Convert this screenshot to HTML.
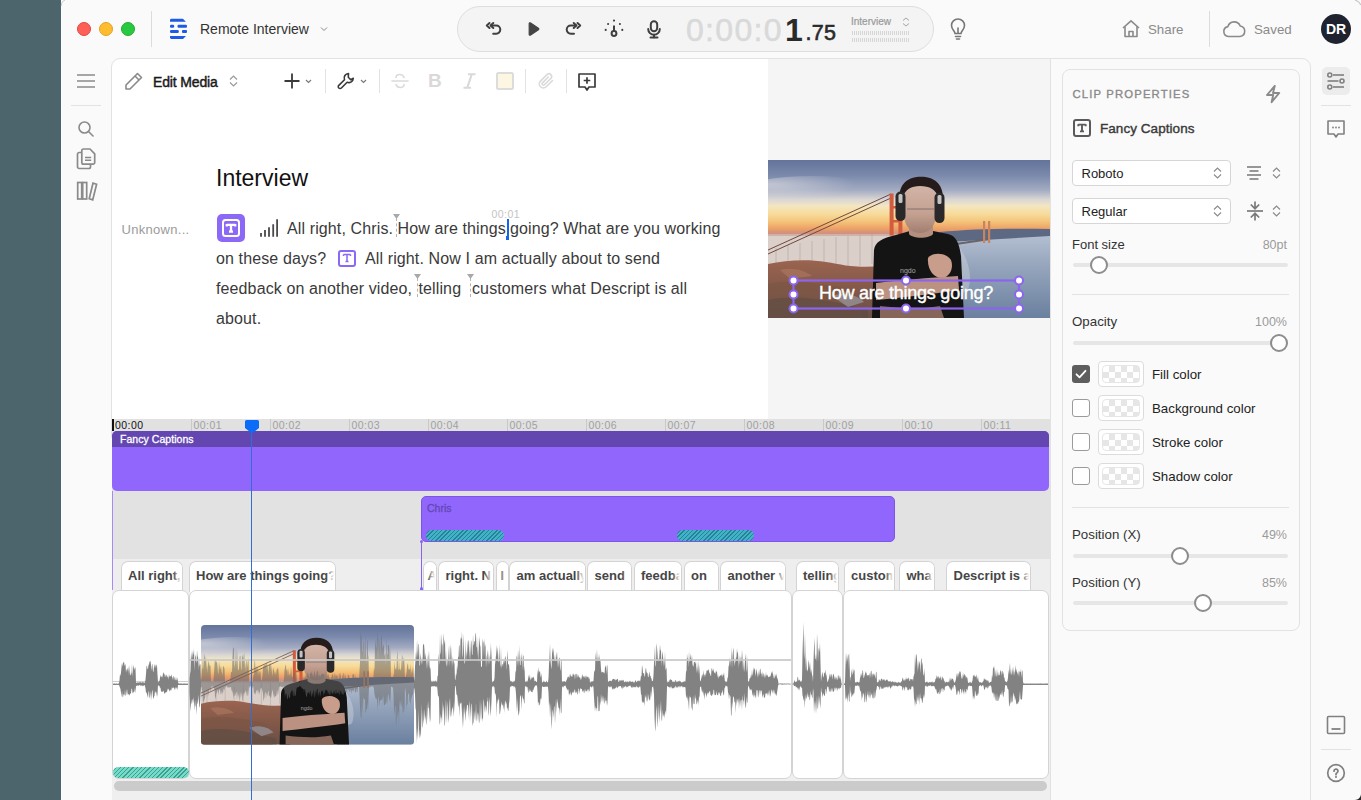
<!DOCTYPE html>
<html><head><meta charset="utf-8">
<style>
*{margin:0;padding:0;box-sizing:border-box}
html,body{width:1361px;height:800px;overflow:hidden;background:#4c656d;font-family:"Liberation Sans",sans-serif;color:#333}
.a{position:absolute}
#win{position:absolute;left:61px;top:0;width:1300px;height:800px;background:#fafafa;border-left:1px solid #fdfdfd;overflow:hidden}
svg{display:block;position:absolute;overflow:visible}
.t{position:absolute;white-space:nowrap;line-height:1}
</style></head><body>
<div id="win"></div>
<svg style="left:61px;top:0" width="6" height="6" viewBox="0 0 6 6"><path d="M0.3 6C0.3 3 1.5 1 4 0" fill="none" stroke="#c8c8c8" stroke-width="1"/></svg>
<svg style="left:1352px;top:0" width="9" height="6" viewBox="0 0 9 6"><path d="M3 0C6 1 8 3 9 5" fill="none" stroke="#c8c8c8" stroke-width="1.2"/></svg>
<svg style="left:1355px;top:794px" width="6" height="6" viewBox="0 0 6 6"><path d="M6 0V6H0C3 6 6 3 6 0z" fill="#2a2a2a"/></svg>
<div class="a" style="left:0;top:0;width:1361px;height:800px">

<!-- ============ TOP BAR ============ -->
<div class="a" style="left:77px;top:22px;width:14px;height:14px;border-radius:50%;background:#fe5f57;border:0.5px solid #e2463f"></div>
<div class="a" style="left:99px;top:22px;width:14px;height:14px;border-radius:50%;background:#febc2e;border:0.5px solid #e1a325"></div>
<div class="a" style="left:121px;top:22px;width:14px;height:14px;border-radius:50%;background:#28c840;border:0.5px solid #1dad2b"></div>
<div class="a" style="left:151px;top:11px;width:1px;height:36px;background:#dcdcdc"></div>
<!-- logo -->
<svg style="left:169px;top:18px" width="20" height="22" viewBox="0 0 20 22">
 <path d="M1 2.2a1.4 1.4 0 0 1 1.4-1.4h11.5l3 3H1z" fill="#1d5ae8"/>
 <rect x="1" y="6.8" width="4.2" height="2.9" rx="1.2" fill="#1d5ae8"/><rect x="8.5" y="6.8" width="9.5" height="2.9" rx="1.2" fill="#1d5ae8"/>
 <rect x="1" y="12" width="8.8" height="3" rx="1.2" fill="#1d5ae8"/><rect x="13" y="12" width="5" height="3" rx="1" fill="#1d5ae8"/>
 <path d="M1 18h16l-3 3H2.4A1.4 1.4 0 0 1 1 19.6z" fill="#1d5ae8"/>
</svg>
<div class="t" style="left:200px;top:22px;font-size:14px;color:#333">Remote Interview</div>
<svg style="left:320px;top:26px" width="8" height="6" viewBox="0 0 8 6"><path d="M1 1.5l3 3 3-3" fill="none" stroke="#888" stroke-width="1"/></svg>

<!-- transport pill -->
<div class="a" style="left:457px;top:6px;width:477px;height:46px;border-radius:23px;background:#f4f4f4;border:1px solid #dedede"></div>
<!-- undo -->
<svg style="left:484px;top:19px" width="20" height="20" viewBox="0 0 20 20"><g fill="none" stroke="#3f3f3f" stroke-width="2" stroke-linecap="round" stroke-linejoin="round"><path d="M5.5 4L2.8 6.5l2.7 2.5"/><path d="M9.3 4L6.6 6.5l2.7 2.5"/><path d="M7 6.5h5.2a4 4 0 0 1 0 8.2H9.2"/></g></svg>
<!-- play -->
<svg style="left:527px;top:21px" width="14" height="16" viewBox="0 0 14 16"><path d="M2.2 2.6a.9.9 0 0 1 1.4-.7l7.8 5.3a1 1 0 0 1 0 1.6l-7.8 5.3a.9.9 0 0 1-1.4-.7z" fill="#444" stroke="#444" stroke-width="1.2" stroke-linejoin="round"/></svg>
<!-- redo -->
<svg style="left:563px;top:19px" width="20" height="20" viewBox="0 0 20 20"><g fill="none" stroke="#3f3f3f" stroke-width="2" stroke-linecap="round" stroke-linejoin="round"><path d="M10.7 4l2.7 2.5-2.7 2.5"/><path d="M14.5 4l2.7 2.5-2.7 2.5"/><path d="M13 6.5H7.8a4 4 0 0 0 0 8.2H11"/></g></svg>
<!-- split -->
<svg style="left:604px;top:19px" width="20" height="20" viewBox="0 0 20 20"><g fill="#3f3f3f"><circle cx="10" cy="1.6" r="1.05"/><circle cx="4.1" cy="5" r="1.05"/><circle cx="15.9" cy="5" r="1.05"/><circle cx="1.7" cy="10.9" r="1.05"/><circle cx="18.3" cy="10.9" r="1.05"/></g><g fill="none" stroke="#3f3f3f" stroke-width="2"><path d="M10 6.5v5.5"/><circle cx="10" cy="14.5" r="2.4"/></g></svg>
<!-- mic -->
<svg style="left:645px;top:18px" width="18" height="22" viewBox="0 0 18 22"><g fill="none" stroke="#3f3f3f" stroke-width="2" stroke-linecap="round"><rect x="5.8" y="3.2" width="6.4" height="10" rx="3.2"/><path d="M3.2 11a5.8 5.8 0 0 0 11.6 0"/><path d="M9 16.8v3M5.5 19.6h7"/></g></svg>
<!-- timecode -->
<div class="t" style="left:686px;top:13.9px;font-size:32px;color:#d9d9d9;letter-spacing:1.3px;-webkit-text-stroke:0.5px #d9d9d9">0:00:0</div>
<div class="t" style="left:785px;top:13.9px;font-size:32px;font-weight:bold;color:#2a2a2a">1</div>
<div class="t" style="left:805.5px;top:22.8px;font-size:21.5px;color:#2a2a2a;letter-spacing:0.3px;-webkit-text-stroke:0.6px #2a2a2a">.75</div>
<div class="t" style="left:851px;top:16.5px;font-size:10px;color:#9a9a9a;-webkit-text-stroke:0.2px #9a9a9a">Interview</div>
<svg style="left:902px;top:17px" width="8" height="10" viewBox="0 0 8 10"><path d="M1 3.5L4 1l3 2.5M1 6.5L4 9l3-2.5" fill="none" stroke="#a5a5a5" stroke-width="1"/></svg>
<div class="a" style="left:852px;top:31px;width:58px;height:4px;background:repeating-linear-gradient(90deg,#d6d6d6 0 1px,transparent 1px 2px)"></div>
<div class="a" style="left:852px;top:37.5px;width:58px;height:4px;background:repeating-linear-gradient(90deg,#d6d6d6 0 1px,transparent 1px 2px)"></div>
<!-- bulb -->
<svg style="left:948px;top:18px" width="20" height="22" viewBox="0 0 20 22"><g fill="none" stroke="#777" stroke-width="1.6" stroke-linecap="round"><path d="M7 15.5c0-2.5-3.5-4-3.5-8a6.5 6.5 0 0 1 13 0c0 4-3.5 5.5-3.5 8z"/><path d="M7.5 18.5h5M8.5 21h3"/><path d="M10 15V10"/></g></svg>

<!-- share -->
<svg style="left:1121px;top:19px" width="20" height="19" viewBox="0 0 20 19"><g fill="none" stroke="#8a8a8a" stroke-width="1.6" stroke-linejoin="round"><path d="M2 9L10 1.8 18 9"/><path d="M4 7.5V17.5h12V7.5"/><path d="M8 17.5v-5h4v5"/></g></svg>
<div class="t" style="left:1148px;top:22.6px;font-size:13.3px;color:#8a8a8a">Share</div>
<div class="a" style="left:1209px;top:11px;width:1px;height:36px;background:#dcdcdc"></div>
<svg style="left:1222px;top:19px" width="24" height="20" viewBox="0 0 24 20"><path d="M6.5 17.5a5 5 0 0 1-.6-9.9A6.5 6.5 0 0 1 18.2 7a5.3 5.3 0 0 1-.2 10.5z" fill="none" stroke="#8a8a8a" stroke-width="1.6" stroke-linejoin="round"/></svg>
<div class="t" style="left:1254px;top:22.6px;font-size:13.3px;color:#8a8a8a">Saved</div>
<div class="a" style="left:1321px;top:14px;width:30px;height:30px;border-radius:50%;background:#1f2330"></div>
<div class="t" style="left:1321px;top:22px;width:30px;text-align:center;font-size:14px;font-weight:bold;color:#fff">DR</div>

<!-- ============ LEFT RAIL ============ -->
<svg style="left:77px;top:74px" width="18" height="14" viewBox="0 0 18 14"><g stroke="#8a8a8a" stroke-width="1.6"><path d="M0 1h18M0 7h18M0 13h18"/></g></svg>
<div class="a" style="left:71px;top:105px;width:30px;height:1px;background:#e2e2e2"></div>
<svg style="left:77px;top:120px" width="18" height="18" viewBox="0 0 18 18"><g fill="none" stroke="#8a8a8a" stroke-width="1.6" stroke-linecap="round"><circle cx="7.5" cy="7.5" r="5.5"/><path d="M11.5 11.5l4.5 4.5"/></g></svg>
<svg style="left:76px;top:148px" width="20" height="22" viewBox="0 0 20 22"><g fill="none" stroke="#8a8a8a" stroke-width="1.7" stroke-linejoin="round"><path d="M5 4.5H3.2A1.7 1.7 0 0 0 1.5 6.2v12.6a1.7 1.7 0 0 0 1.7 1.7h9.6a1.7 1.7 0 0 0 1.7-1.7V16.5"/><path d="M7.5 1h6.5l4.7 4.8v8.7a1.7 1.7 0 0 1-1.7 1.7H7.5a1.7 1.7 0 0 1-1.7-1.7V2.7A1.7 1.7 0 0 1 7.5 1z" fill="#fafafa"/><path d="M9 9.5h6.2M9 12.2h6.2" stroke-width="1.5"/></g></svg>
<svg style="left:76px;top:181px" width="21" height="20" viewBox="0 0 21 20"><g fill="none" stroke="#8a8a8a" stroke-width="1.7" stroke-linejoin="miter"><rect x="1.7" y="1.5" width="4" height="16.5"/><rect x="6.7" y="1.5" width="4" height="16.5"/><path d="M13.2 17.8L17 2.2l3.6 1.1-3.9 15.6z"/></g></svg>

<!-- ============ EDITOR ============ -->
<div class="a" style="left:111px;top:58px;width:990px;height:380px;background:#fff;border:1px solid #e2e2e2;border-top-left-radius:9px"></div>
<div class="a" style="left:768px;top:59px;width:282px;height:360px;background:#f5f5f5"></div>
<!-- toolbar -->
<svg style="left:124px;top:72px" width="19" height="19" viewBox="0 0 19 19"><g fill="none" stroke="#8a8a8a" stroke-width="1.6" stroke-linejoin="round"><path d="M13.5 1.5l4 4L6 17H2v-4z"/><path d="M11 4l4 4"/></g></svg>
<div class="t" style="left:153px;top:74.5px;font-size:14px;color:#1a1a1a;letter-spacing:-0.15px;-webkit-text-stroke:0.45px #1a1a1a">Edit Media</div>
<svg style="left:229px;top:75px" width="9" height="12" viewBox="0 0 9 12"><path d="M1 4.5l3.5-3.5L8 4.5M1 7.5L4.5 11 8 7.5" fill="none" stroke="#9a9a9a" stroke-width="1.2"/></svg>
<svg style="left:284px;top:73px" width="16" height="16" viewBox="0 0 16 16"><path d="M8 0.5v15M0.5 8h15" stroke="#3a3a3a" stroke-width="1.8"/></svg>
<svg style="left:305px;top:79px" width="7" height="5" viewBox="0 0 7 5"><path d="M1 1l2.5 2.5L6 1" fill="none" stroke="#777" stroke-width="1.1"/></svg>
<div class="a" style="left:325px;top:69px;width:1px;height:24px;background:#e2e2e2"></div>
<svg style="left:337px;top:72px" width="18" height="18" viewBox="0 0 18 18"><path d="M11.5 1.5a4.5 4.5 0 0 0-4 6.2L1.8 13.4a1.8 1.8 0 0 0 2.6 2.6l5.7-5.7a4.5 4.5 0 0 0 6.2-4l-2.6 1.4-2.4-2.4z" fill="none" stroke="#3a3a3a" stroke-width="1.6" stroke-linejoin="round"/></svg>
<svg style="left:360px;top:79px" width="7" height="5" viewBox="0 0 7 5"><path d="M1 1l2.5 2.5L6 1" fill="none" stroke="#777" stroke-width="1.1"/></svg>
<div class="a" style="left:379px;top:69px;width:1px;height:24px;background:#e2e2e2"></div>
<svg style="left:391px;top:73px" width="18" height="16" viewBox="0 0 18 16"><g fill="none" stroke="#dadada" stroke-width="1.6" stroke-linecap="round"><path d="M1 8h16"/><path d="M13 4.5c-.6-1.8-2.2-3-4.2-3C6.5 1.5 5 2.8 5 4.5M5 11.5c.6 1.8 2.2 3 4.2 3 2.3 0 3.8-1.3 3.8-3"/></g></svg>
<div class="t" style="left:428px;top:71px;font-size:19px;font-weight:bold;color:#d9d9d9">B</div>
<svg style="left:462px;top:73px" width="15" height="16" viewBox="0 0 15 16"><path d="M6 1.2h7.5M1.5 14.8H9M9.8 1.2L5.2 14.8" stroke="#d9d9d9" stroke-width="2.1" fill="none"/></svg>
<div class="a" style="left:496px;top:72px;width:18px;height:17.5px;border:2px solid #dcdcdc;border-radius:2.5px;background:#fdf6e2"></div>
<div class="a" style="left:525px;top:69px;width:1px;height:24px;background:#e2e2e2"></div>
<svg style="left:537px;top:72px" width="18" height="18" viewBox="0 0 18 18"><path d="M15.5 8.5l-6.3 6.3a4 4 0 0 1-5.7-5.7l6.7-6.7a2.7 2.7 0 0 1 3.8 3.8L7.4 12.8a1.3 1.3 0 0 1-1.9-1.9L11.3 5" fill="none" stroke="#dadada" stroke-width="1.6" stroke-linecap="round"/></svg>
<div class="a" style="left:566px;top:69px;width:1px;height:24px;background:#e2e2e2"></div>
<svg style="left:577px;top:72px" width="20" height="20" viewBox="0 0 20 20"><g fill="none" stroke="#3a3a3a" stroke-width="1.7" stroke-linejoin="round"><path d="M2 2h16v13h-6l-2 3-2-3H2z"/><path d="M10 5.2v6.6M6.7 8.5h6.6"/></g></svg>

<!-- transcript -->
<div class="t" style="left:216px;top:166.5px;font-size:23px;color:#111">Interview</div>
<div class="t" style="left:121.5px;top:223px;font-size:13px;letter-spacing:0.3px;color:#9b9b9b">Unknown...</div>
<div class="a" style="left:217px;top:214px;width:28px;height:28px;border-radius:5px;background:#8c68f6"></div>
<div class="a" style="left:222px;top:219px;width:18px;height:18px;border-radius:3.5px;border:2.3px solid #fff"></div>
<svg style="left:224px;top:221px" width="14" height="14" viewBox="0 0 14 14"><path d="M2.8 3.8h8.4M7 3.8v6.6M5 10.6h4M2.8 3v2.4M11.2 3v2.4" stroke="#fff" stroke-width="2.3" fill="none"/></svg>
<svg style="left:259px;top:218px" width="20" height="20" viewBox="0 0 20 20"><g stroke="#4a4a4a" stroke-width="1.8"><path d="M2 18.7v-3.6M6 18.7v-6.6M10 18.7v-9.5M14.2 18.7v-12.5M18.1 18.7V1.2"/></g></svg>
<div class="t" style="left:287px;top:220.5px;font-size:16px;color:#3a3a3a;letter-spacing:0.12px">All right, Chris.</div>
<div class="a" style="left:396px;top:218px;width:0;height:19px;border-left:1px dashed #b5b5b5"></div>
<svg style="left:393px;top:214px" width="7" height="5" viewBox="0 0 7 5"><path d="M0 0h7L3.5 5z" fill="#a8a8a8"/></svg>
<div class="t" style="left:397.5px;top:220.5px;font-size:16px;color:#3a3a3a;letter-spacing:0.12px">How are things</div>
<div class="t" style="left:491.5px;top:208.5px;font-size:10.5px;letter-spacing:0.45px;color:#c3c3c3">00:01</div>
<div class="a" style="left:506.5px;top:219px;width:2px;height:20px;background:#1565e8"></div>
<div class="a" style="left:506px;top:236px;width:3px;height:4px;background:#1565e8"></div>
<div class="t" style="left:510px;top:220.5px;font-size:16px;color:#3a3a3a;letter-spacing:0.12px">going? What are you working</div>

<div class="t" style="left:216px;top:250.5px;font-size:16px;color:#3a3a3a;letter-spacing:0.12px">on these days?</div>
<div class="a" style="left:338px;top:249.5px;width:18px;height:17px;border-radius:3px;border:2px solid #8c68f6"></div>
<svg style="left:341px;top:252px" width="12" height="12" viewBox="0 0 12 12"><path d="M2.5 2.5h7M6 2.5v7M4.5 9.5h3M2.5 2.5v1.4M9.5 2.5v1.4" stroke="#8c68f6" stroke-width="1.5" fill="none"/></svg>
<div class="t" style="left:365px;top:250.5px;font-size:16px;color:#3a3a3a;letter-spacing:0.12px">All right. Now I am actually about to send</div>

<div class="t" style="left:216px;top:281px;font-size:16px;color:#3a3a3a;letter-spacing:0.12px">feedback on another video,</div>
<div class="a" style="left:416.5px;top:278px;width:0;height:19px;border-left:1px dashed #b5b5b5"></div>
<svg style="left:413.5px;top:274px" width="7" height="5" viewBox="0 0 7 5"><path d="M0 0h7L3.5 5z" fill="#a8a8a8"/></svg>
<div class="t" style="left:418.5px;top:281px;font-size:16px;color:#3a3a3a;letter-spacing:0.12px">telling</div>
<div class="a" style="left:469.5px;top:278px;width:0;height:19px;border-left:1px dashed #b5b5b5"></div>
<svg style="left:466.5px;top:274px" width="7" height="5" viewBox="0 0 7 5"><path d="M0 0h7L3.5 5z" fill="#a8a8a8"/></svg>
<div class="t" style="left:472px;top:281px;font-size:16px;color:#3a3a3a;letter-spacing:0.12px">customers what Descript is all</div>
<div class="t" style="left:216px;top:311px;font-size:16px;color:#3a3a3a;letter-spacing:0.12px">about.</div>

<!-- ============ RIGHT PANEL ============ -->
<div class="a" style="left:1050px;top:58px;width:261px;height:760px;border:1px solid #e2e2e2;border-top-right-radius:9px;background:#fafafa"></div>
<div class="a" style="left:1062px;top:69px;width:238px;height:562px;border:1px solid #e2e2e2;border-radius:8px;background:#fafafa"></div>
<div class="t" style="left:1072.5px;top:88.8px;font-size:11.3px;letter-spacing:1.15px;color:#8a8a8a;-webkit-text-stroke:0.35px #8a8a8a">CLIP PROPERTIES</div>
<svg style="left:1263px;top:84px" width="20" height="20" viewBox="0 0 20 20"><path d="M11.8 1.8L4 11h6.2l-1.6 7.2L16.2 9H10z" fill="none" stroke="#8a8a8a" stroke-width="1.9" stroke-linejoin="round"/></svg>
<div class="a" style="left:1073px;top:119px;width:18px;height:18px;border-radius:3px;border:2px solid #5a5a5a"></div>
<svg style="left:1076px;top:122px" width="12" height="12" viewBox="0 0 12 12"><path d="M2.3 2.6h7.4M6 2.6v6.8M4 9.4h4M2.3 2.2v2M9.7 2.2v2" stroke="#5a5a5a" stroke-width="1.9" fill="none"/></svg>
<div class="t" style="left:1100px;top:122px;font-size:13.5px;color:#3a3a3a;letter-spacing:0.05px;-webkit-text-stroke:0.4px #3a3a3a">Fancy Captions</div>

<div class="a" style="left:1072px;top:160px;width:159px;height:26px;border-radius:4px;border:1px solid #d6d6d6;background:#fff"></div>
<div class="t" style="left:1081.5px;top:166.5px;font-size:13px;color:#222">Roboto</div>
<svg style="left:1213px;top:167px" width="9" height="12" viewBox="0 0 9 12"><path d="M1 4.5l3.5-3.5L8 4.5M1 7.5L4.5 11 8 7.5" fill="none" stroke="#8a8a8a" stroke-width="1.1"/></svg>
<svg style="left:1246px;top:165px" width="16" height="16" viewBox="0 0 16 16"><path d="M1 2h14M3.5 6h9M1 10h14M3.5 14h9" stroke="#777" stroke-width="1.5"/></svg>
<svg style="left:1272px;top:167px" width="9" height="12" viewBox="0 0 9 12"><path d="M1 4.5l3.5-3.5L8 4.5M1 7.5L4.5 11 8 7.5" fill="none" stroke="#8a8a8a" stroke-width="1.1"/></svg>

<div class="a" style="left:1072px;top:198px;width:159px;height:26px;border-radius:4px;border:1px solid #d6d6d6;background:#fff"></div>
<div class="t" style="left:1081.5px;top:204.5px;font-size:13px;color:#222">Regular</div>
<svg style="left:1213px;top:205px" width="9" height="12" viewBox="0 0 9 12"><path d="M1 4.5l3.5-3.5L8 4.5M1 7.5L4.5 11 8 7.5" fill="none" stroke="#8a8a8a" stroke-width="1.1"/></svg>
<svg style="left:1246px;top:200px" width="18" height="22" viewBox="0 0 18 22"><g fill="none" stroke="#7a7a7a" stroke-width="1.7"><path d="M1 11h16"/><path d="M9 1.5v7M4.8 4.5L9 8.7 13.2 4.5"/><path d="M9 20.5v-7M4.8 17.5L9 13.3l4.2 4.2"/></g></svg>
<svg style="left:1272px;top:205px" width="9" height="12" viewBox="0 0 9 12"><path d="M1 4.5l3.5-3.5L8 4.5M1 7.5L4.5 11 8 7.5" fill="none" stroke="#8a8a8a" stroke-width="1.1"/></svg>

<div class="t" style="left:1072px;top:238px;font-size:13px;color:#333">Font size</div>
<div class="t" style="left:1187px;width:100px;text-align:right;top:239px;font-size:12.5px;color:#9a9a9a">80pt</div>
<div class="a" style="left:1073px;top:263px;width:215px;height:4px;border-radius:2px;background:#e6e6e6"></div><div class="a" style="left:1090px;top:256px;width:18px;height:18px;border-radius:50%;border:2px solid #8d8d8d;background:#fff"></div>
<div class="a" style="left:1072px;top:294px;width:217px;height:1px;background:#e2e2e2"></div>
<div class="t" style="left:1072px;top:315px;font-size:13.3px;color:#333">Opacity</div>
<div class="t" style="left:1187px;width:100px;text-align:right;top:316px;font-size:12.5px;color:#9a9a9a">100%</div>
<div class="a" style="left:1073px;top:341px;width:215px;height:4px;border-radius:2px;background:#e6e6e6"></div><div class="a" style="left:1270px;top:334px;width:18px;height:18px;border-radius:50%;border:2px solid #8d8d8d;background:#fff"></div>
<div class="a" style="left:1072px;top:365px;width:18px;height:18px;border-radius:3px;background:#5e5e5e"></div><svg style="left:1074px;top:367px" width="14" height="14" viewBox="0 0 14 14"><path d="M2.5 7.3l3 3 6-6.5" fill="none" stroke="#fff" stroke-width="1.8" stroke-linecap="round" stroke-linejoin="round"/></svg><div class="a" style="left:1098px;top:361px;width:46px;height:26px;border-radius:4px;border:1px solid #dcdcdc;background:#fff"></div><div class="a" style="left:1102px;top:365px;width:38px;height:18px;border-radius:4px;background-color:#fff;background-image:linear-gradient(45deg,#e6e6e6 25%,transparent 25%,transparent 75%,#e6e6e6 75%),linear-gradient(45deg,#e6e6e6 25%,transparent 25%,transparent 75%,#e6e6e6 75%);background-size:12px 12px;background-position:0 0,6px 6px;border:1px solid #e6e6e6"></div><div class="t" style="left:1152px;top:367.8px;font-size:13.3px;color:#222">Fill color</div>
<div class="a" style="left:1072px;top:399px;width:18px;height:18px;border-radius:3px;border:1.5px solid #9b9b9b;background:#fff"></div><div class="a" style="left:1098px;top:395px;width:46px;height:26px;border-radius:4px;border:1px solid #dcdcdc;background:#fff"></div><div class="a" style="left:1102px;top:399px;width:38px;height:18px;border-radius:4px;background-color:#fff;background-image:linear-gradient(45deg,#e6e6e6 25%,transparent 25%,transparent 75%,#e6e6e6 75%),linear-gradient(45deg,#e6e6e6 25%,transparent 25%,transparent 75%,#e6e6e6 75%);background-size:12px 12px;background-position:0 0,6px 6px;border:1px solid #e6e6e6"></div><div class="t" style="left:1152px;top:401.8px;font-size:13.3px;color:#222">Background color</div>
<div class="a" style="left:1072px;top:433px;width:18px;height:18px;border-radius:3px;border:1.5px solid #9b9b9b;background:#fff"></div><div class="a" style="left:1098px;top:429px;width:46px;height:26px;border-radius:4px;border:1px solid #dcdcdc;background:#fff"></div><div class="a" style="left:1102px;top:433px;width:38px;height:18px;border-radius:4px;background-color:#fff;background-image:linear-gradient(45deg,#e6e6e6 25%,transparent 25%,transparent 75%,#e6e6e6 75%),linear-gradient(45deg,#e6e6e6 25%,transparent 25%,transparent 75%,#e6e6e6 75%);background-size:12px 12px;background-position:0 0,6px 6px;border:1px solid #e6e6e6"></div><div class="t" style="left:1152px;top:435.8px;font-size:13.3px;color:#222">Stroke color</div>
<div class="a" style="left:1072px;top:467px;width:18px;height:18px;border-radius:3px;border:1.5px solid #9b9b9b;background:#fff"></div><div class="a" style="left:1098px;top:463px;width:46px;height:26px;border-radius:4px;border:1px solid #dcdcdc;background:#fff"></div><div class="a" style="left:1102px;top:467px;width:38px;height:18px;border-radius:4px;background-color:#fff;background-image:linear-gradient(45deg,#e6e6e6 25%,transparent 25%,transparent 75%,#e6e6e6 75%),linear-gradient(45deg,#e6e6e6 25%,transparent 25%,transparent 75%,#e6e6e6 75%);background-size:12px 12px;background-position:0 0,6px 6px;border:1px solid #e6e6e6"></div><div class="t" style="left:1152px;top:469.8px;font-size:13.3px;color:#222">Shadow color</div>

<div class="a" style="left:1072px;top:507px;width:217px;height:1px;background:#e2e2e2"></div>
<div class="t" style="left:1072px;top:528px;font-size:13.3px;color:#333">Position (X)</div>
<div class="t" style="left:1187px;width:100px;text-align:right;top:529px;font-size:12.5px;color:#9a9a9a">49%</div>
<div class="a" style="left:1073px;top:553.5px;width:215px;height:4px;border-radius:2px;background:#e6e6e6"></div><div class="a" style="left:1171px;top:546.5px;width:18px;height:18px;border-radius:50%;border:2px solid #8d8d8d;background:#fff"></div>
<div class="t" style="left:1072px;top:576px;font-size:13.3px;color:#333">Position (Y)</div>
<div class="t" style="left:1187px;width:100px;text-align:right;top:577px;font-size:12.5px;color:#9a9a9a">85%</div>
<div class="a" style="left:1073px;top:601px;width:215px;height:4px;border-radius:2px;background:#e6e6e6"></div><div class="a" style="left:1194px;top:594px;width:18px;height:18px;border-radius:50%;border:2px solid #8d8d8d;background:#fff"></div>

<!-- right rail -->
<div class="a" style="left:1322px;top:67px;width:28px;height:28px;border-radius:5px;background:#ececec"></div>
<svg style="left:1326px;top:71px" width="20" height="20" viewBox="0 0 20 20"><g fill="none" stroke="#808080" stroke-width="1.6"><circle cx="3.8" cy="4" r="2"/><path d="M7 4h11"/><circle cx="16" cy="10" r="2"/><path d="M1.5 10h11"/><circle cx="3.8" cy="16" r="2"/><path d="M7 16h11"/></g></svg>
<div class="a" style="left:1321px;top:105px;width:30px;height:1px;background:#e2e2e2"></div>
<svg style="left:1326px;top:119px" width="20" height="20" viewBox="0 0 20 20"><g fill="none" stroke="#808080" stroke-width="1.6" stroke-linejoin="round"><path d="M2 2h16v13h-6l-2 3-2-3H2z"/></g><g fill="#808080"><circle cx="7" cy="8.5" r="0.9"/><circle cx="10" cy="8.5" r="0.9"/><circle cx="13" cy="8.5" r="0.9"/></g></svg>
<svg style="left:1326px;top:715px" width="20" height="20" viewBox="0 0 20 20"><g fill="none" stroke="#808080" stroke-width="1.6"><rect x="1.5" y="1.5" width="17" height="17" rx="1"/><path d="M5.5 14h9" stroke-width="1.8"/></g></svg>
<div class="a" style="left:1321px;top:749px;width:30px;height:1px;background:#e2e2e2"></div>
<svg style="left:1326px;top:763px" width="20" height="20" viewBox="0 0 20 20"><g fill="none" stroke="#808080" stroke-width="1.7"><circle cx="10" cy="10" r="8.3"/><path d="M8 8.2a2 2 0 1 1 2.8 1.8c-.6.3-.8.7-.8 1.3v.4" stroke-linecap="round" stroke-width="1.8"/></g><circle cx="10" cy="14" r="1.05" fill="#808080"/></svg>

<!-- ============ TIMELINE ============ -->
<div class="a" style="left:112px;top:419px;width:938px;height:12px;background:#e1e1e1"></div>
<div class="a" style="left:112px;top:419px;width:1.5px;height:12px;background:#111"></div>
<div class="t" style="left:115px;top:420px;font-size:10.5px;letter-spacing:0.45px;color:#111">00:00</div>
<div class="a" style="left:191px;top:419px;width:1px;height:12px;background:#c9c9c9"></div>
<div class="t" style="left:193.5px;top:420px;font-size:10.5px;letter-spacing:0.45px;color:#a0a0a0">00:01</div>
<div class="a" style="left:270px;top:419px;width:1px;height:12px;background:#c9c9c9"></div>
<div class="t" style="left:272.5px;top:420px;font-size:10.5px;letter-spacing:0.45px;color:#a0a0a0">00:02</div>
<div class="a" style="left:349px;top:419px;width:1px;height:12px;background:#c9c9c9"></div>
<div class="t" style="left:351.5px;top:420px;font-size:10.5px;letter-spacing:0.45px;color:#a0a0a0">00:03</div>
<div class="a" style="left:428px;top:419px;width:1px;height:12px;background:#c9c9c9"></div>
<div class="t" style="left:430.5px;top:420px;font-size:10.5px;letter-spacing:0.45px;color:#a0a0a0">00:04</div>
<div class="a" style="left:507px;top:419px;width:1px;height:12px;background:#c9c9c9"></div>
<div class="t" style="left:509.5px;top:420px;font-size:10.5px;letter-spacing:0.45px;color:#a0a0a0">00:05</div>
<div class="a" style="left:586px;top:419px;width:1px;height:12px;background:#c9c9c9"></div>
<div class="t" style="left:588.5px;top:420px;font-size:10.5px;letter-spacing:0.45px;color:#a0a0a0">00:06</div>
<div class="a" style="left:665px;top:419px;width:1px;height:12px;background:#c9c9c9"></div>
<div class="t" style="left:667.5px;top:420px;font-size:10.5px;letter-spacing:0.45px;color:#a0a0a0">00:07</div>
<div class="a" style="left:744px;top:419px;width:1px;height:12px;background:#c9c9c9"></div>
<div class="t" style="left:746.5px;top:420px;font-size:10.5px;letter-spacing:0.45px;color:#a0a0a0">00:08</div>
<div class="a" style="left:823px;top:419px;width:1px;height:12px;background:#c9c9c9"></div>
<div class="t" style="left:825.5px;top:420px;font-size:10.5px;letter-spacing:0.45px;color:#a0a0a0">00:09</div>
<div class="a" style="left:902px;top:419px;width:1px;height:12px;background:#c9c9c9"></div>
<div class="t" style="left:904.5px;top:420px;font-size:10.5px;letter-spacing:0.45px;color:#a0a0a0">00:10</div>
<div class="a" style="left:981px;top:419px;width:1px;height:12px;background:#c9c9c9"></div>
<div class="t" style="left:983.5px;top:420px;font-size:10.5px;letter-spacing:0.45px;color:#a0a0a0">00:11</div>
<div class="a" style="left:112px;top:431px;width:938px;height:128px;background:#e2e2e2"></div>
<div class="a" style="left:112px;top:559px;width:938px;height:31px;background:#eeeeee"></div>
<div class="a" style="left:112px;top:590px;width:938px;height:210px;background:#efefef"></div>
<div class="a" style="left:112px;top:431px;width:937px;height:60px;border-radius:5px;background:#9066fd;overflow:hidden"><div class="a" style="left:0;top:0;width:937px;height:16px;background:#6446b1"></div></div>
<div class="t" style="left:120px;top:433.8px;font-size:10.5px;color:#fff;letter-spacing:0.05px;-webkit-text-stroke:0.3px #fff">Fancy Captions</div>
<div class="a" style="left:421px;top:496px;width:474px;height:46px;border-radius:5px;background:#9066fd;border:1px solid #7d55e6"></div>
<div class="t" style="left:427px;top:503px;font-size:10.5px;color:#6547b6;-webkit-text-stroke:0.3px #6547b6">Chris</div>
<div class="a" style="left:426px;top:530px;width:78px;height:11px;border-radius:6px;background:repeating-linear-gradient(135deg,#3fb3c8 0 1.9px,#2b7f97 1.9px 3px)"></div>
<div class="a" style="left:677px;top:530px;width:77px;height:11px;border-radius:6px;background:repeating-linear-gradient(135deg,#3fb3c8 0 1.9px,#2b7f97 1.9px 3px)"></div>
<div class="a" style="left:112px;top:491px;width:1px;height:99px;background:#a68af5"></div>
<div class="a" style="left:420.5px;top:541px;width:1.5px;height:49px;background:#8a63f0"></div>
<div class="a" style="left:419.5px;top:539.5px;width:3.5px;height:3.5px;border-radius:50%;background:#8a63f0"></div>
<div class="a" style="left:419.5px;top:587px;width:3.5px;height:3.5px;border-radius:50%;background:#8a63f0"></div>
<div class="a" style="left:120.5px;top:560.5px;width:62.0px;height:31px;border:1px solid #d3d3d3;border-bottom:none;border-radius:7px 7px 0 0;background:#fff;overflow:hidden"><div class="t" style="left:6.5px;top:7.8px;font-size:13px;font-weight:bold;color:#464646">All right,</div><div class="a" style="right:0;top:0;width:9px;height:30px;background:linear-gradient(90deg,rgba(255,255,255,0),#fff 90%)"></div></div>
<div class="a" style="left:188.5px;top:560.5px;width:147.0px;height:31px;border:1px solid #d3d3d3;border-bottom:none;border-radius:7px 7px 0 0;background:#fff;overflow:hidden"><div class="t" style="left:6.5px;top:7.8px;font-size:13px;font-weight:bold;color:#464646">How are things going?</div><div class="a" style="right:0;top:0;width:9px;height:30px;background:linear-gradient(90deg,rgba(255,255,255,0),#fff 90%)"></div></div>
<div class="a" style="left:423px;top:560.5px;width:14px;height:31px;border:1px solid #d3d3d3;border-bottom:none;border-radius:7px 7px 0 0;background:#fff;overflow:hidden"><div class="t" style="left:3.5px;top:7.8px;font-size:13px;font-weight:bold;color:#464646">A</div><div class="a" style="right:0;top:0;width:9px;height:30px;background:linear-gradient(90deg,rgba(255,255,255,0),#fff 90%)"></div></div>
<div class="a" style="left:438px;top:560.5px;width:56px;height:31px;border:1px solid #d3d3d3;border-bottom:none;border-radius:7px 7px 0 0;background:#fff;overflow:hidden"><div class="t" style="left:6.5px;top:7.8px;font-size:13px;font-weight:bold;color:#464646">right. N</div><div class="a" style="right:0;top:0;width:9px;height:30px;background:linear-gradient(90deg,rgba(255,255,255,0),#fff 90%)"></div></div>
<div class="a" style="left:496px;top:560.5px;width:13px;height:31px;border:1px solid #d3d3d3;border-bottom:none;border-radius:7px 7px 0 0;background:#fff;overflow:hidden"><div class="t" style="left:3.5px;top:7.8px;font-size:13px;font-weight:bold;color:#464646">I</div><div class="a" style="right:0;top:0;width:9px;height:30px;background:linear-gradient(90deg,rgba(255,255,255,0),#fff 90%)"></div></div>
<div class="a" style="left:509px;top:560.5px;width:77px;height:31px;border:1px solid #d3d3d3;border-bottom:none;border-radius:7px 7px 0 0;background:#fff;overflow:hidden"><div class="t" style="left:6.5px;top:7.8px;font-size:13px;font-weight:bold;color:#464646">am actually</div><div class="a" style="right:0;top:0;width:9px;height:30px;background:linear-gradient(90deg,rgba(255,255,255,0),#fff 90%)"></div></div>
<div class="a" style="left:587px;top:560.5px;width:44.5px;height:31px;border:1px solid #d3d3d3;border-bottom:none;border-radius:7px 7px 0 0;background:#fff;overflow:hidden"><div class="t" style="left:6.5px;top:7.8px;font-size:13px;font-weight:bold;color:#464646">send</div><div class="a" style="right:0;top:0;width:9px;height:30px;background:linear-gradient(90deg,rgba(255,255,255,0),#fff 90%)"></div></div>
<div class="a" style="left:633.5px;top:560.5px;width:48.5px;height:31px;border:1px solid #d3d3d3;border-bottom:none;border-radius:7px 7px 0 0;background:#fff;overflow:hidden"><div class="t" style="left:6.5px;top:7.8px;font-size:13px;font-weight:bold;color:#464646">feedba</div><div class="a" style="right:0;top:0;width:9px;height:30px;background:linear-gradient(90deg,rgba(255,255,255,0),#fff 90%)"></div></div>
<div class="a" style="left:683.5px;top:560.5px;width:35.5px;height:31px;border:1px solid #d3d3d3;border-bottom:none;border-radius:7px 7px 0 0;background:#fff;overflow:hidden"><div class="t" style="left:6.5px;top:7.8px;font-size:13px;font-weight:bold;color:#464646">on</div><div class="a" style="right:0;top:0;width:9px;height:30px;background:linear-gradient(90deg,rgba(255,255,255,0),#fff 90%)"></div></div>
<div class="a" style="left:720px;top:560.5px;width:66px;height:31px;border:1px solid #d3d3d3;border-bottom:none;border-radius:7px 7px 0 0;background:#fff;overflow:hidden"><div class="t" style="left:6.5px;top:7.8px;font-size:13px;font-weight:bold;color:#464646">another v</div><div class="a" style="right:0;top:0;width:9px;height:30px;background:linear-gradient(90deg,rgba(255,255,255,0),#fff 90%)"></div></div>
<div class="a" style="left:795.5px;top:560.5px;width:43.0px;height:31px;border:1px solid #d3d3d3;border-bottom:none;border-radius:7px 7px 0 0;background:#fff;overflow:hidden"><div class="t" style="left:6.5px;top:7.8px;font-size:13px;font-weight:bold;color:#464646">telling</div><div class="a" style="right:0;top:0;width:9px;height:30px;background:linear-gradient(90deg,rgba(255,255,255,0),#fff 90%)"></div></div>
<div class="a" style="left:843.5px;top:560.5px;width:51.5px;height:31px;border:1px solid #d3d3d3;border-bottom:none;border-radius:7px 7px 0 0;background:#fff;overflow:hidden"><div class="t" style="left:6.5px;top:7.8px;font-size:13px;font-weight:bold;color:#464646">custom</div><div class="a" style="right:0;top:0;width:9px;height:30px;background:linear-gradient(90deg,rgba(255,255,255,0),#fff 90%)"></div></div>
<div class="a" style="left:899px;top:560.5px;width:36px;height:31px;border:1px solid #d3d3d3;border-bottom:none;border-radius:7px 7px 0 0;background:#fff;overflow:hidden"><div class="t" style="left:6.5px;top:7.8px;font-size:13px;font-weight:bold;color:#464646">what</div><div class="a" style="right:0;top:0;width:9px;height:30px;background:linear-gradient(90deg,rgba(255,255,255,0),#fff 90%)"></div></div>
<div class="a" style="left:946px;top:560.5px;width:84.5px;height:31px;border:1px solid #d3d3d3;border-bottom:none;border-radius:7px 7px 0 0;background:#fff;overflow:hidden"><div class="t" style="left:6.5px;top:7.8px;font-size:13px;font-weight:bold;color:#464646">Descript is a</div><div class="a" style="right:0;top:0;width:9px;height:30px;background:linear-gradient(90deg,rgba(255,255,255,0),#fff 90%)"></div></div>
<div class="a" style="left:112px;top:590px;width:76.5px;height:188.5px;border:1px solid #d4d4d4;border-radius:7px;background:#fff"></div>
<div class="a" style="left:188.5px;top:590px;width:603.5px;height:188.5px;border:1px solid #d4d4d4;border-radius:7px;background:#fff"></div>
<div class="a" style="left:792px;top:590px;width:51px;height:188.5px;border:1px solid #d4d4d4;border-radius:7px;background:#fff"></div>
<div class="a" style="left:843px;top:590px;width:206px;height:188.5px;border:1px solid #d4d4d4;border-radius:7px;background:#fff"></div>
<div class="a" style="left:113px;top:681px;width:75px;height:1px;background:#cfcfcf"></div>

<div class="a" style="left:113px;top:683.5px;width:75px;height:1px;background:#8a8a8a"></div>
<div class="a" style="left:844px;top:683.5px;width:204px;height:1px;background:#8a8a8a"></div>
<svg style="left:0;top:0" width="1361" height="800" viewBox="0 0 1361 800"><path d="M113.00 683.5 L113.50 683.7 L114.00 683.4 L114.50 683.5 L115.00 683.5 L115.50 683.8 L116.00 683.5 L116.50 683.4 L117.00 683.8 L117.50 683.7 L118.00 683.7 L118.50 683.4 L119.00 683.0 L119.50 680.2 L120.00 673.8 L120.50 676.3 L121.00 672.4 L121.50 667.1 L122.00 662.6 L122.50 667.1 L123.00 663.0 L123.50 662.5 L124.00 661.6 L124.50 665.4 L125.00 665.4 L125.50 663.6 L126.00 673.0 L126.50 669.8 L127.00 669.4 L127.50 667.7 L128.00 672.1 L128.50 665.9 L129.00 675.7 L129.50 664.8 L130.00 675.1 L130.50 675.5 L131.00 672.2 L131.50 674.4 L132.00 663.3 L132.50 676.7 L133.00 670.8 L133.50 665.0 L134.00 667.7 L134.50 670.3 L135.00 666.9 L135.50 668.2 L136.00 682.8 L136.50 682.9 L137.00 682.2 L137.50 682.8 L138.00 682.0 L138.50 682.8 L139.00 682.5 L139.50 682.3 L140.00 682.2 L140.50 681.9 L141.00 682.7 L141.50 682.6 L142.00 682.4 L142.50 682.2 L143.00 682.1 L143.50 682.8 L144.00 682.3 L144.50 683.2 L145.00 681.9 L145.50 679.8 L146.00 674.1 L146.50 666.4 L147.00 665.6 L147.50 669.1 L148.00 668.9 L148.50 664.9 L149.00 664.3 L149.50 662.1 L150.00 661.1 L150.50 661.2 L151.00 665.2 L151.50 671.0 L152.00 663.8 L152.50 664.7 L153.00 672.1 L153.50 671.6 L154.00 667.0 L154.50 663.8 L155.00 668.2 L155.50 663.9 L156.00 668.2 L156.50 664.5 L157.00 665.3 L157.50 674.8 L158.00 682.2 L158.50 682.2 L159.00 680.4 L159.50 681.3 L160.00 677.4 L160.50 674.7 L161.00 677.4 L161.50 677.1 L162.00 675.2 L162.50 678.1 L163.00 672.7 L163.50 672.5 L164.00 674.2 L164.50 673.8 L165.00 677.3 L165.50 674.2 L166.00 677.7 L166.50 674.6 L167.00 675.3 L167.50 677.7 L168.00 675.9 L168.50 679.7 L169.00 673.7 L169.50 676.5 L170.00 676.5 L170.50 676.3 L171.00 676.0 L171.50 674.3 L172.00 677.6 L172.50 677.3 L173.00 680.4 L173.50 676.0 L174.00 676.5 L174.50 677.9 L175.00 680.5 L175.50 679.7 L176.00 676.5 L176.50 679.9 L177.00 680.6 L177.50 677.3 L178.00 682.3 L178.50 683.3 L179.00 683.4 L179.50 683.6 L180.00 683.4 L180.50 683.4 L181.00 683.4 L181.50 683.4 L182.00 683.6 L182.50 683.7 L183.00 683.7 L183.50 683.4 L184.00 683.5 L184.50 683.5 L185.00 683.5 L185.50 683.8 L186.00 683.6 L186.50 683.7 L187.00 683.4 L187.50 683.7 L188.00 683.5 L188.00 684.6 L187.50 684.3 L187.00 684.3 L186.50 684.3 L186.00 684.5 L185.50 684.4 L185.00 684.4 L184.50 684.5 L184.00 684.3 L183.50 684.7 L183.00 684.5 L182.50 684.4 L182.00 684.3 L181.50 684.3 L181.00 684.6 L180.50 684.3 L180.00 684.2 L179.50 684.4 L179.00 684.3 L178.50 684.6 L178.00 685.0 L177.50 690.4 L177.00 687.1 L176.50 688.0 L176.00 688.9 L175.50 686.7 L175.00 690.4 L174.50 688.8 L174.00 688.0 L173.50 687.4 L173.00 687.6 L172.50 688.7 L172.00 686.9 L171.50 689.2 L171.00 691.3 L170.50 689.6 L170.00 690.2 L169.50 691.8 L169.00 689.5 L168.50 689.6 L168.00 688.3 L167.50 689.8 L167.00 691.7 L166.50 692.1 L166.00 692.4 L165.50 692.2 L165.00 693.6 L164.50 693.7 L164.00 692.6 L163.50 690.3 L163.00 692.1 L162.50 692.1 L162.00 690.4 L161.50 692.2 L161.00 691.5 L160.50 687.4 L160.00 688.1 L159.50 685.9 L159.00 685.7 L158.50 685.8 L158.00 685.0 L157.50 694.0 L157.00 697.0 L156.50 693.6 L156.00 691.3 L155.50 693.3 L155.00 690.5 L154.50 695.8 L154.00 696.5 L153.50 699.2 L153.00 697.2 L152.50 689.6 L152.00 691.8 L151.50 695.7 L151.00 700.4 L150.50 690.7 L150.00 696.8 L149.50 698.4 L149.00 691.0 L148.50 692.0 L148.00 698.0 L147.50 696.0 L147.00 694.0 L146.50 692.2 L146.00 692.9 L145.50 688.5 L145.00 685.9 L144.50 684.9 L144.00 685.3 L143.50 685.7 L143.00 686.2 L142.50 686.0 L142.00 684.9 L141.50 685.7 L141.00 685.7 L140.50 685.4 L140.00 685.5 L139.50 684.9 L139.00 685.1 L138.50 686.1 L138.00 685.5 L137.50 685.5 L137.00 685.7 L136.50 685.8 L136.00 685.7 L135.50 693.5 L135.00 687.7 L134.50 691.0 L134.00 692.4 L133.50 691.5 L133.00 693.4 L132.50 692.8 L132.00 688.5 L131.50 688.7 L131.00 693.2 L130.50 693.4 L130.00 694.1 L129.50 695.7 L129.00 693.9 L128.50 694.0 L128.00 695.5 L127.50 692.9 L127.00 688.7 L126.50 692.4 L126.00 695.4 L125.50 695.8 L125.00 689.4 L124.50 695.8 L124.00 694.3 L123.50 694.3 L123.00 697.4 L122.50 696.5 L122.00 690.6 L121.50 697.3 L121.00 692.9 L120.50 689.3 L120.00 687.5 L119.50 686.6 L119.00 684.9 L118.50 684.5 L118.00 684.4 L117.50 684.6 L117.00 684.5 L116.50 684.3 L116.00 684.6 L115.50 684.3 L115.00 684.3 L114.50 684.5 L114.00 684.5 L113.50 684.6 L113.00 684.2Z" fill="#828282"/><path d="M189.50 678.7 L190.00 674.3 L190.50 670.4 L191.00 652.4 L191.50 660.2 L192.00 649.6 L192.50 658.9 L193.00 651.0 L193.50 655.6 L194.00 648.0 L194.50 670.9 L195.00 656.9 L195.50 654.5 L196.00 660.2 L196.50 663.5 L197.00 650.1 L197.50 655.8 L198.00 657.8 L198.50 669.9 L199.00 656.0 L199.50 666.9 L200.00 663.9 L200.50 664.8 L201.00 681.1 L201.50 678.0 L202.00 668.8 L202.50 668.3 L203.00 653.0 L203.50 670.6 L204.00 659.6 L204.50 653.3 L205.00 657.9 L205.50 660.3 L206.00 655.4 L206.50 669.7 L207.00 662.5 L207.50 673.4 L208.00 665.1 L208.50 661.1 L209.00 662.3 L209.50 666.5 L210.00 665.0 L210.50 666.4 L211.00 681.6 L211.50 680.8 L212.00 681.6 L212.50 680.6 L213.00 682.3 L213.50 680.7 L214.00 673.4 L214.50 664.5 L215.00 658.6 L215.50 660.2 L216.00 663.3 L216.50 661.2 L217.00 662.1 L217.50 666.0 L218.00 672.7 L218.50 673.9 L219.00 661.0 L219.50 665.5 L220.00 669.7 L220.50 668.1 L221.00 665.6 L221.50 671.2 L222.00 672.7 L222.50 676.1 L223.00 666.6 L223.50 666.0 L224.00 667.5 L224.50 668.4 L225.00 680.9 L225.50 682.5 L226.00 682.2 L226.50 680.5 L227.00 680.9 L227.50 682.4 L228.00 681.3 L228.50 682.4 L229.00 681.1 L229.50 681.8 L230.00 681.1 L230.50 677.9 L231.00 671.8 L231.50 672.3 L232.00 671.6 L232.50 656.7 L233.00 647.2 L233.50 649.0 L234.00 646.4 L234.50 667.9 L235.00 664.8 L235.50 658.4 L236.00 647.4 L236.50 656.6 L237.00 668.9 L237.50 650.1 L238.00 669.6 L238.50 670.2 L239.00 669.1 L239.50 657.6 L240.00 655.4 L240.50 656.2 L241.00 669.4 L241.50 669.8 L242.00 654.8 L242.50 655.7 L243.00 658.3 L243.50 653.7 L244.00 664.5 L244.50 651.0 L245.00 669.3 L245.50 662.0 L246.00 672.5 L246.50 659.1 L247.00 660.1 L247.50 667.9 L248.00 659.1 L248.50 658.6 L249.00 680.5 L249.50 681.9 L250.00 680.9 L250.50 681.3 L251.00 680.5 L251.50 682.0 L252.00 680.2 L252.50 682.3 L253.00 680.5 L253.50 674.2 L254.00 675.3 L254.50 660.0 L255.00 660.8 L255.50 671.4 L256.00 666.1 L256.50 667.8 L257.00 672.5 L257.50 664.5 L258.00 676.8 L258.50 668.5 L259.00 674.7 L259.50 671.7 L260.00 670.8 L260.50 672.2 L261.00 680.5 L261.50 680.2 L262.00 680.2 L262.50 675.2 L263.00 667.0 L263.50 666.7 L264.00 664.8 L264.50 664.8 L265.00 666.6 L265.50 664.8 L266.00 663.3 L266.50 661.9 L267.00 671.0 L267.50 664.0 L268.00 669.1 L268.50 675.5 L269.00 665.7 L269.50 664.5 L270.00 664.7 L270.50 662.8 L271.00 672.2 L271.50 664.0 L272.00 673.8 L272.50 676.3 L273.00 667.1 L273.50 669.2 L274.00 670.6 L274.50 674.7 L275.00 671.1 L275.50 672.7 L276.00 675.8 L276.50 670.7 L277.00 668.6 L277.50 669.4 L278.00 666.5 L278.50 671.8 L279.00 680.5 L279.50 682.6 L280.00 681.9 L280.50 680.5 L281.00 682.0 L281.50 682.3 L282.00 681.5 L282.50 681.9 L283.00 680.7 L283.50 681.7 L284.00 678.7 L284.50 670.1 L285.00 668.3 L285.50 664.4 L286.00 665.6 L286.50 671.5 L287.00 668.7 L287.50 670.7 L288.00 677.0 L288.50 667.5 L289.00 675.6 L289.50 673.5 L290.00 676.2 L290.50 672.9 L291.00 666.5 L291.50 671.7 L292.00 677.3 L292.50 676.4 L293.00 677.1 L293.50 670.6 L294.00 674.1 L294.50 672.6 L295.00 673.3 L295.50 678.7 L296.00 677.4 L296.50 670.2 L297.00 681.3 L297.50 681.3 L298.00 681.2 L298.50 681.4 L299.00 682.3 L299.50 682.6 L300.00 681.9 L300.50 679.9 L301.00 680.4 L301.50 681.8 L302.00 677.9 L302.50 678.1 L303.00 681.0 L303.50 677.3 L304.00 677.2 L304.50 677.8 L305.00 678.1 L305.50 674.3 L306.00 677.8 L306.50 674.4 L307.00 675.6 L307.50 672.1 L308.00 673.9 L308.50 675.1 L309.00 677.8 L309.50 678.5 L310.00 673.2 L310.50 674.1 L311.00 671.6 L311.50 673.1 L312.00 672.7 L312.50 676.5 L313.00 673.2 L313.50 678.6 L314.00 673.2 L314.50 670.2 L315.00 673.2 L315.50 678.2 L316.00 674.0 L316.50 675.0 L317.00 670.4 L317.50 671.4 L318.00 671.2 L318.50 679.0 L319.00 675.3 L319.50 675.6 L320.00 674.7 L320.50 677.8 L321.00 674.5 L321.50 674.5 L322.00 674.1 L322.50 674.1 L323.00 673.0 L323.50 674.2 L324.00 674.4 L324.50 674.8 L325.00 679.1 L325.50 671.8 L326.00 675.7 L326.50 671.9 L327.00 671.8 L327.50 674.5 L328.00 676.4 L328.50 672.2 L329.00 676.9 L329.50 677.7 L330.00 678.9 L330.50 679.6 L331.00 677.1 L331.50 677.5 L332.00 674.3 L332.50 674.0 L333.00 675.0 L333.50 679.5 L334.00 671.9 L334.50 674.6 L335.00 679.1 L335.50 674.6 L336.00 675.0 L336.50 676.2 L337.00 674.4 L337.50 678.5 L338.00 674.0 L338.50 679.2 L339.00 679.9 L339.50 672.5 L340.00 675.3 L340.50 672.6 L341.00 678.4 L341.50 679.4 L342.00 677.3 L342.50 674.1 L343.00 678.5 L343.50 672.9 L344.00 673.0 L344.50 678.8 L345.00 675.1 L345.50 674.7 L346.00 678.9 L346.50 678.6 L347.00 677.7 L347.50 679.3 L348.00 673.7 L348.50 675.4 L349.00 675.1 L349.50 677.6 L350.00 678.5 L350.50 678.8 L351.00 680.3 L351.50 679.2 L352.00 679.7 L352.50 674.6 L353.00 674.2 L353.50 674.3 L354.00 673.9 L354.50 678.1 L355.00 679.5 L355.50 674.2 L356.00 679.7 L356.50 678.2 L357.00 677.3 L357.50 678.4 L358.00 682.5 L358.50 680.5 L359.00 681.0 L359.50 671.1 L360.00 662.4 L360.50 632.1 L361.00 637.3 L361.50 635.5 L362.00 653.3 L362.50 650.0 L363.00 642.9 L363.50 640.6 L364.00 658.2 L364.50 641.3 L365.00 655.2 L365.50 634.8 L366.00 654.5 L366.50 663.5 L367.00 640.8 L367.50 640.3 L368.00 654.2 L368.50 657.2 L369.00 680.8 L369.50 681.7 L370.00 682.3 L370.50 680.2 L371.00 681.0 L371.50 680.7 L372.00 680.8 L372.50 680.7 L373.00 681.2 L373.50 675.4 L374.00 667.5 L374.50 671.0 L375.00 645.4 L375.50 639.0 L376.00 648.9 L376.50 646.3 L377.00 637.6 L377.50 630.8 L378.00 660.4 L378.50 639.5 L379.00 637.8 L379.50 650.3 L380.00 636.2 L380.50 654.0 L381.00 638.7 L381.50 634.4 L382.00 641.7 L382.50 649.2 L383.00 644.4 L383.50 644.6 L384.00 648.7 L384.50 656.0 L385.00 654.3 L385.50 652.2 L386.00 665.4 L386.50 636.5 L387.00 653.8 L387.50 655.0 L388.00 644.8 L388.50 644.9 L389.00 645.3 L389.50 650.9 L390.00 661.9 L390.50 645.9 L391.00 682.1 L391.50 680.2 L392.00 681.6 L392.50 681.2 L393.00 682.2 L393.50 675.1 L394.00 674.3 L394.50 660.8 L395.00 667.6 L395.50 669.0 L396.00 670.0 L396.50 667.4 L397.00 655.2 L397.50 650.1 L398.00 670.0 L398.50 669.8 L399.00 657.1 L399.50 669.3 L400.00 669.1 L400.50 669.5 L401.00 671.5 L401.50 654.2 L402.00 669.5 L402.50 654.8 L403.00 657.3 L403.50 661.2 L404.00 657.4 L404.50 664.9 L405.00 680.8 L405.50 679.1 L406.00 675.3 L406.50 673.3 L407.00 667.3 L407.50 663.7 L408.00 663.5 L408.50 670.0 L409.00 669.0 L409.50 668.4 L410.00 670.5 L410.50 663.4 L411.00 676.1 L411.50 669.3 L412.00 673.5 L412.50 670.1 L413.00 666.4 L413.50 676.8 L414.00 681.3 L414.50 677.6 L415.00 666.7 L415.50 659.8 L416.00 651.1 L416.50 660.0 L417.00 639.4 L417.50 650.6 L418.00 657.9 L418.50 643.8 L419.00 644.4 L419.50 665.9 L420.00 665.1 L420.50 653.0 L421.00 657.5 L421.50 665.3 L422.00 656.4 L422.50 664.6 L423.00 643.2 L423.50 645.0 L424.00 644.1 L424.50 650.3 L425.00 660.3 L425.50 652.5 L426.00 658.0 L426.50 662.1 L427.00 669.5 L427.50 654.1 L428.00 668.3 L428.50 657.0 L429.00 650.3 L429.50 665.0 L430.00 669.6 L430.50 667.0 L431.00 680.6 L431.50 681.0 L432.00 682.6 L432.50 680.5 L433.00 682.2 L433.50 680.9 L434.00 680.4 L434.50 681.8 L435.00 680.9 L435.50 680.3 L436.00 682.3 L436.50 680.5 L437.00 682.6 L437.50 676.0 L438.00 675.6 L438.50 653.2 L439.00 659.2 L439.50 664.9 L440.00 633.2 L440.50 655.0 L441.00 651.8 L441.50 632.9 L442.00 645.7 L442.50 642.9 L443.00 664.0 L443.50 633.0 L444.00 639.1 L444.50 644.6 L445.00 638.9 L445.50 664.2 L446.00 649.4 L446.50 664.5 L447.00 666.9 L447.50 660.0 L448.00 660.3 L448.50 644.9 L449.00 667.6 L449.50 657.3 L450.00 643.9 L450.50 649.3 L451.00 664.4 L451.50 645.5 L452.00 669.0 L452.50 655.4 L453.00 665.2 L453.50 658.0 L454.00 661.7 L454.50 663.9 L455.00 680.2 L455.50 679.3 L456.00 672.9 L456.50 676.1 L457.00 665.0 L457.50 670.4 L458.00 656.7 L458.50 657.2 L459.00 644.9 L459.50 645.5 L460.00 660.4 L460.50 640.1 L461.00 637.0 L461.50 639.8 L462.00 630.7 L462.50 658.6 L463.00 653.7 L463.50 633.1 L464.00 651.6 L464.50 663.7 L465.00 662.9 L465.50 638.4 L466.00 662.4 L466.50 649.9 L467.00 656.8 L467.50 645.6 L468.00 639.9 L468.50 641.1 L469.00 649.1 L469.50 660.1 L470.00 640.0 L470.50 661.4 L471.00 640.0 L471.50 642.0 L472.00 654.2 L472.50 655.3 L473.00 634.3 L473.50 645.4 L474.00 644.2 L474.50 640.8 L475.00 641.6 L475.50 632.6 L476.00 634.5 L476.50 647.8 L477.00 646.3 L477.50 657.1 L478.00 635.4 L478.50 663.4 L479.00 645.6 L479.50 636.0 L480.00 644.5 L480.50 647.2 L481.00 666.9 L481.50 666.9 L482.00 665.8 L482.50 638.1 L483.00 643.2 L483.50 640.2 L484.00 658.3 L484.50 638.3 L485.00 646.9 L485.50 643.7 L486.00 668.3 L486.50 658.0 L487.00 654.6 L487.50 649.2 L488.00 666.5 L488.50 650.7 L489.00 664.9 L489.50 654.2 L490.00 663.6 L490.50 641.9 L491.00 660.3 L491.50 645.7 L492.00 682.0 L492.50 682.2 L493.00 680.5 L493.50 681.4 L494.00 680.9 L494.50 678.1 L495.00 664.2 L495.50 661.1 L496.00 655.1 L496.50 644.3 L497.00 657.2 L497.50 646.7 L498.00 651.7 L498.50 661.4 L499.00 662.2 L499.50 643.8 L500.00 664.0 L500.50 667.6 L501.00 646.8 L501.50 668.8 L502.00 664.6 L502.50 663.8 L503.00 667.0 L503.50 658.5 L504.00 664.2 L504.50 657.5 L505.00 663.3 L505.50 655.8 L506.00 657.4 L506.50 670.8 L507.00 659.1 L507.50 649.8 L508.00 663.4 L508.50 665.0 L509.00 663.7 L509.50 670.6 L510.00 680.2 L510.50 680.8 L511.00 682.0 L511.50 681.3 L512.00 681.0 L512.50 681.9 L513.00 682.4 L513.50 680.8 L514.00 682.2 L514.50 680.4 L515.00 681.0 L515.50 670.2 L516.00 672.5 L516.50 657.1 L517.00 655.2 L517.50 666.3 L518.00 649.6 L518.50 657.1 L519.00 667.2 L519.50 644.7 L520.00 665.0 L520.50 665.3 L521.00 653.8 L521.50 660.7 L522.00 651.9 L522.50 670.2 L523.00 656.2 L523.50 655.0 L524.00 671.4 L524.50 665.4 L525.00 680.2 L525.50 682.6 L526.00 681.0 L526.50 681.9 L527.00 680.3 L527.50 682.3 L528.00 679.3 L528.50 674.5 L529.00 679.0 L529.50 674.3 L530.00 678.8 L530.50 680.4 L531.00 676.0 L531.50 679.6 L532.00 677.1 L532.50 677.8 L533.00 678.3 L533.50 676.6 L534.00 677.4 L534.50 681.2 L535.00 681.3 L535.50 680.5 L536.00 681.5 L536.50 681.9 L537.00 682.0 L537.50 669.4 L538.00 675.0 L538.50 666.9 L539.00 672.4 L539.50 671.6 L540.00 670.7 L540.50 676.6 L541.00 677.1 L541.50 672.8 L542.00 682.0 L542.50 682.2 L543.00 682.5 L543.50 680.3 L544.00 682.3 L544.50 681.5 L545.00 681.5 L545.50 682.6 L546.00 681.7 L546.50 680.6 L547.00 682.0 L547.50 682.3 L548.00 682.2 L548.50 678.2 L549.00 664.1 L549.50 657.5 L550.00 643.2 L550.50 659.9 L551.00 666.1 L551.50 669.4 L552.00 654.7 L552.50 647.2 L553.00 653.1 L553.50 647.6 L554.00 659.1 L554.50 659.2 L555.00 654.0 L555.50 662.1 L556.00 659.4 L556.50 654.8 L557.00 651.6 L557.50 660.2 L558.00 668.0 L558.50 662.6 L559.00 657.8 L559.50 657.4 L560.00 668.2 L560.50 671.1 L561.00 659.5 L561.50 660.1 L562.00 682.4 L562.50 680.8 L563.00 682.3 L563.50 681.2 L564.00 680.9 L564.50 681.5 L565.00 681.1 L565.50 682.3 L566.00 681.7 L566.50 679.7 L567.00 679.6 L567.50 676.8 L568.00 677.4 L568.50 676.1 L569.00 677.9 L569.50 677.0 L570.00 673.6 L570.50 675.1 L571.00 676.8 L571.50 675.4 L572.00 677.4 L572.50 675.6 L573.00 673.1 L573.50 674.8 L574.00 674.5 L574.50 675.0 L575.00 679.8 L575.50 673.7 L576.00 674.2 L576.50 673.4 L577.00 678.7 L577.50 673.6 L578.00 677.8 L578.50 674.5 L579.00 676.9 L579.50 677.7 L580.00 676.7 L580.50 680.2 L581.00 677.4 L581.50 679.8 L582.00 674.5 L582.50 674.7 L583.00 677.6 L583.50 676.6 L584.00 676.1 L584.50 678.1 L585.00 675.3 L585.50 676.4 L586.00 679.0 L586.50 675.2 L587.00 677.6 L587.50 676.8 L588.00 676.6 L588.50 677.2 L589.00 679.6 L589.50 677.3 L590.00 682.7 L590.50 682.6 L591.00 680.7 L591.50 681.6 L592.00 682.1 L592.50 680.9 L593.00 681.5 L593.50 680.8 L594.00 672.7 L594.50 670.1 L595.00 671.7 L595.50 651.9 L596.00 659.2 L596.50 658.5 L597.00 648.7 L597.50 661.9 L598.00 656.8 L598.50 661.3 L599.00 653.7 L599.50 658.5 L600.00 660.4 L600.50 661.1 L601.00 669.1 L601.50 672.8 L602.00 671.8 L602.50 672.1 L603.00 672.5 L603.50 672.6 L604.00 672.2 L604.50 673.9 L605.00 666.8 L605.50 666.9 L606.00 664.7 L606.50 674.4 L607.00 664.3 L607.50 666.8 L608.00 682.2 L608.50 681.6 L609.00 680.9 L609.50 680.7 L610.00 681.1 L610.50 681.1 L611.00 680.3 L611.50 681.6 L612.00 680.5 L612.50 679.3 L613.00 679.0 L613.50 679.0 L614.00 678.8 L614.50 680.0 L615.00 678.6 L615.50 680.4 L616.00 680.3 L616.50 679.7 L617.00 679.1 L617.50 678.8 L618.00 679.4 L618.50 682.0 L619.00 682.1 L619.50 680.4 L620.00 679.9 L620.50 681.0 L621.00 680.1 L621.50 681.1 L622.00 679.4 L622.50 680.9 L623.00 680.1 L623.50 679.7 L624.00 682.1 L624.50 681.8 L625.00 682.6 L625.50 681.0 L626.00 681.5 L626.50 682.4 L627.00 681.0 L627.50 681.8 L628.00 681.7 L628.50 682.5 L629.00 680.9 L629.50 680.8 L630.00 682.6 L630.50 680.4 L631.00 681.9 L631.50 681.8 L632.00 681.8 L632.50 681.6 L633.00 681.4 L633.50 682.4 L634.00 682.6 L634.50 682.5 L635.00 681.0 L635.50 680.2 L636.00 681.0 L636.50 682.3 L637.00 681.9 L637.50 680.7 L638.00 680.7 L638.50 680.5 L639.00 681.5 L639.50 680.2 L640.00 681.7 L640.50 679.4 L641.00 675.6 L641.50 676.5 L642.00 664.7 L642.50 667.8 L643.00 673.1 L643.50 673.4 L644.00 673.0 L644.50 676.4 L645.00 676.6 L645.50 669.0 L646.00 667.8 L646.50 672.1 L647.00 673.1 L647.50 672.7 L648.00 677.2 L648.50 677.1 L649.00 673.4 L649.50 671.4 L650.00 676.3 L650.50 675.4 L651.00 678.1 L651.50 678.4 L652.00 681.2 L652.50 681.0 L653.00 680.8 L653.50 675.0 L654.00 662.5 L654.50 656.5 L655.00 645.4 L655.50 667.0 L656.00 664.8 L656.50 643.1 L657.00 647.2 L657.50 654.1 L658.00 662.1 L658.50 657.9 L659.00 661.8 L659.50 653.6 L660.00 644.2 L660.50 650.6 L661.00 650.2 L661.50 666.1 L662.00 657.4 L662.50 650.9 L663.00 654.9 L663.50 666.9 L664.00 657.2 L664.50 666.7 L665.00 651.0 L665.50 669.7 L666.00 669.3 L666.50 667.1 L667.00 682.5 L667.50 682.3 L668.00 680.6 L668.50 681.9 L669.00 682.2 L669.50 680.0 L670.00 679.5 L670.50 679.2 L671.00 679.7 L671.50 679.9 L672.00 680.2 L672.50 682.0 L673.00 681.7 L673.50 682.2 L674.00 680.5 L674.50 681.9 L675.00 682.2 L675.50 679.8 L676.00 680.2 L676.50 682.0 L677.00 682.2 L677.50 681.5 L678.00 680.9 L678.50 681.1 L679.00 682.1 L679.50 680.2 L680.00 681.4 L680.50 680.9 L681.00 682.3 L681.50 682.5 L682.00 682.1 L682.50 682.5 L683.00 681.6 L683.50 681.9 L684.00 681.2 L684.50 680.9 L685.00 682.3 L685.50 680.5 L686.00 671.4 L686.50 670.9 L687.00 653.2 L687.50 658.8 L688.00 658.2 L688.50 667.0 L689.00 650.8 L689.50 661.9 L690.00 660.5 L690.50 653.3 L691.00 658.4 L691.50 659.7 L692.00 654.6 L692.50 664.3 L693.00 666.2 L693.50 666.6 L694.00 661.5 L694.50 662.2 L695.00 662.0 L695.50 664.2 L696.00 660.8 L696.50 673.6 L697.00 665.8 L697.50 673.1 L698.00 660.4 L698.50 667.2 L699.00 674.9 L699.50 664.5 L700.00 680.6 L700.50 681.4 L701.00 679.5 L701.50 677.6 L702.00 674.9 L702.50 674.0 L703.00 677.6 L703.50 670.1 L704.00 674.8 L704.50 674.6 L705.00 677.6 L705.50 672.7 L706.00 675.6 L706.50 670.1 L707.00 671.6 L707.50 670.3 L708.00 670.0 L708.50 669.2 L709.00 671.1 L709.50 673.3 L710.00 673.6 L710.50 675.5 L711.00 676.4 L711.50 668.6 L712.00 668.3 L712.50 670.4 L713.00 671.5 L713.50 668.2 L714.00 672.4 L714.50 673.3 L715.00 671.7 L715.50 674.4 L716.00 670.0 L716.50 672.0 L717.00 671.5 L717.50 677.8 L718.00 674.1 L718.50 678.8 L719.00 676.2 L719.50 676.7 L720.00 675.6 L720.50 674.9 L721.00 676.1 L721.50 675.2 L722.00 673.3 L722.50 677.6 L723.00 674.6 L723.50 675.4 L724.00 672.0 L724.50 678.1 L725.00 681.4 L725.50 681.1 L726.00 682.6 L726.50 680.9 L727.00 682.3 L727.50 677.6 L728.00 677.4 L728.50 666.9 L729.00 664.7 L729.50 656.8 L730.00 667.3 L730.50 658.9 L731.00 662.4 L731.50 646.3 L732.00 668.9 L732.50 656.0 L733.00 650.6 L733.50 647.5 L734.00 661.7 L734.50 666.5 L735.00 656.5 L735.50 662.9 L736.00 658.7 L736.50 656.3 L737.00 648.3 L737.50 653.4 L738.00 651.7 L738.50 668.8 L739.00 654.8 L739.50 665.5 L740.00 654.4 L740.50 663.0 L741.00 656.6 L741.50 661.6 L742.00 649.6 L742.50 657.4 L743.00 670.8 L743.50 658.4 L744.00 672.5 L744.50 668.5 L745.00 659.7 L745.50 657.8 L746.00 652.9 L746.50 669.1 L747.00 672.6 L747.50 655.3 L748.00 681.6 L748.50 681.6 L749.00 681.5 L749.50 678.8 L750.00 678.0 L750.50 677.7 L751.00 674.0 L751.50 677.5 L752.00 669.2 L752.50 675.9 L753.00 673.6 L753.50 669.4 L754.00 667.1 L754.50 669.9 L755.00 668.6 L755.50 676.6 L756.00 672.7 L756.50 668.2 L757.00 672.3 L757.50 674.7 L758.00 677.9 L758.50 670.2 L759.00 676.2 L759.50 672.9 L760.00 668.7 L760.50 669.0 L761.00 674.7 L761.50 672.2 L762.00 677.5 L762.50 671.0 L763.00 677.7 L763.50 673.2 L764.00 673.4 L764.50 678.5 L765.00 674.1 L765.50 677.9 L766.00 671.8 L766.50 676.6 L767.00 674.8 L767.50 675.0 L768.00 676.7 L768.50 677.5 L769.00 676.2 L769.50 677.2 L770.00 675.7 L770.50 676.7 L771.00 673.7 L771.50 671.4 L772.00 674.3 L772.50 670.6 L773.00 674.9 L773.50 679.0 L774.00 673.2 L774.50 678.7 L775.00 677.3 L775.50 673.9 L776.00 677.1 L776.50 673.3 L777.00 677.7 L777.50 678.6 L778.00 680.2 L778.50 683.7 L779.00 683.8 L779.50 683.6 L780.00 683.4 L780.50 683.4 L781.00 683.6 L781.50 683.4 L782.00 683.5 L782.50 683.5 L783.00 683.4 L783.50 683.8 L784.00 683.4 L784.50 683.4 L785.00 683.5 L785.50 683.7 L786.00 683.5 L786.50 683.5 L787.00 683.7 L787.50 683.6 L788.00 683.6 L788.50 683.4 L789.00 683.6 L789.50 683.7 L790.00 683.7 L790.50 683.7 L791.00 683.7 L791.00 684.4 L790.50 684.3 L790.00 684.6 L789.50 684.6 L789.00 684.5 L788.50 684.3 L788.00 684.5 L787.50 684.3 L787.00 684.3 L786.50 684.5 L786.00 684.6 L785.50 684.6 L785.00 684.3 L784.50 684.6 L784.00 684.5 L783.50 684.5 L783.00 684.6 L782.50 684.7 L782.00 684.6 L781.50 684.4 L781.00 684.5 L780.50 684.3 L780.00 684.3 L779.50 684.3 L779.00 684.5 L778.50 684.6 L778.00 686.0 L777.50 689.8 L777.00 692.7 L776.50 695.5 L776.00 695.8 L775.50 692.8 L775.00 694.7 L774.50 692.2 L774.00 689.3 L773.50 691.0 L773.00 693.8 L772.50 692.1 L772.00 689.4 L771.50 690.0 L771.00 692.6 L770.50 695.2 L770.00 696.9 L769.50 692.6 L769.00 689.5 L768.50 695.9 L768.00 691.6 L767.50 696.1 L767.00 692.6 L766.50 693.6 L766.00 694.3 L765.50 692.9 L765.00 697.7 L764.50 697.3 L764.00 698.2 L763.50 693.4 L763.00 695.4 L762.50 697.7 L762.00 693.6 L761.50 689.9 L761.00 690.9 L760.50 690.3 L760.00 695.5 L759.50 690.2 L759.00 690.6 L758.50 696.3 L758.00 697.4 L757.50 689.9 L757.00 690.4 L756.50 690.1 L756.00 698.6 L755.50 696.9 L755.00 694.6 L754.50 697.1 L754.00 691.7 L753.50 698.0 L753.00 694.1 L752.50 696.0 L752.00 691.2 L751.50 689.8 L751.00 689.0 L750.50 689.5 L750.00 690.8 L749.50 688.6 L749.00 686.9 L748.50 685.6 L748.00 687.1 L747.50 702.7 L747.00 702.6 L746.50 696.2 L746.00 707.4 L745.50 707.4 L745.00 701.6 L744.50 692.7 L744.00 705.9 L743.50 700.4 L743.00 700.5 L742.50 695.1 L742.00 710.2 L741.50 700.2 L741.00 699.6 L740.50 701.6 L740.00 707.1 L739.50 697.2 L739.00 709.5 L738.50 698.1 L738.00 703.6 L737.50 700.1 L737.00 699.1 L736.50 706.6 L736.00 697.1 L735.50 713.6 L735.00 701.5 L734.50 702.8 L734.00 697.8 L733.50 696.8 L733.00 696.3 L732.50 708.5 L732.00 701.5 L731.50 715.5 L731.00 715.5 L730.50 697.1 L730.00 695.6 L729.50 694.4 L729.00 699.8 L728.50 693.7 L728.00 692.4 L727.50 686.4 L727.00 686.4 L726.50 686.0 L726.00 685.5 L725.50 686.0 L725.00 687.6 L724.50 688.3 L724.00 695.3 L723.50 695.2 L723.00 692.5 L722.50 689.5 L722.00 693.3 L721.50 692.2 L721.00 695.9 L720.50 696.0 L720.00 694.3 L719.50 693.3 L719.00 691.8 L718.50 693.1 L718.00 695.8 L717.50 694.7 L717.00 694.7 L716.50 690.9 L716.00 694.7 L715.50 695.2 L715.00 694.8 L714.50 695.1 L714.00 689.4 L713.50 690.0 L713.00 695.0 L712.50 693.6 L712.00 696.1 L711.50 696.1 L711.00 694.6 L710.50 695.4 L710.00 690.8 L709.50 691.3 L709.00 692.8 L708.50 692.6 L708.00 695.0 L707.50 692.1 L707.00 694.2 L706.50 697.7 L706.00 694.2 L705.50 692.3 L705.00 694.9 L704.50 700.0 L704.00 692.1 L703.50 696.2 L703.00 689.4 L702.50 692.7 L702.00 692.0 L701.50 689.6 L701.00 686.2 L700.50 687.1 L700.00 687.1 L699.50 698.0 L699.00 695.8 L698.50 705.8 L698.00 699.5 L697.50 701.6 L697.00 703.7 L696.50 704.5 L696.00 697.8 L695.50 699.1 L695.00 694.1 L694.50 704.0 L694.00 704.3 L693.50 703.4 L693.00 695.2 L692.50 711.0 L692.00 708.8 L691.50 707.6 L691.00 698.3 L690.50 696.4 L690.00 698.3 L689.50 695.2 L689.00 711.1 L688.50 703.7 L688.00 697.1 L687.50 701.1 L687.00 694.7 L686.50 698.2 L686.00 697.1 L685.50 687.7 L685.00 687.0 L684.50 687.0 L684.00 687.3 L683.50 686.7 L683.00 687.7 L682.50 686.6 L682.00 686.8 L681.50 685.9 L681.00 685.9 L680.50 686.6 L680.00 687.8 L679.50 686.4 L679.00 685.5 L678.50 687.4 L678.00 686.0 L677.50 687.9 L677.00 687.0 L676.50 688.0 L676.00 685.7 L675.50 686.0 L675.00 688.4 L674.50 687.0 L674.00 687.6 L673.50 688.4 L673.00 687.9 L672.50 688.5 L672.00 688.3 L671.50 685.9 L671.00 688.9 L670.50 686.7 L670.00 686.4 L669.50 687.9 L669.00 686.9 L668.50 687.0 L668.00 686.6 L667.50 685.7 L667.00 687.3 L666.50 703.6 L666.00 715.0 L665.50 710.3 L665.00 712.4 L664.50 718.5 L664.00 713.2 L663.50 715.4 L663.00 716.7 L662.50 709.6 L662.00 721.6 L661.50 719.4 L661.00 699.9 L660.50 708.7 L660.00 713.7 L659.50 723.2 L659.00 703.1 L658.50 720.0 L658.00 702.9 L657.50 727.7 L657.00 720.9 L656.50 705.1 L656.00 711.2 L655.50 731.7 L655.00 727.7 L654.50 717.1 L654.00 694.9 L653.50 689.1 L653.00 686.3 L652.50 687.6 L652.00 686.4 L651.50 697.7 L651.00 690.3 L650.50 696.0 L650.00 700.9 L649.50 699.3 L649.00 700.0 L648.50 693.8 L648.00 699.8 L647.50 702.0 L647.00 692.7 L646.50 702.8 L646.00 695.9 L645.50 698.2 L645.00 694.1 L644.50 706.4 L644.00 701.5 L643.50 703.6 L643.00 701.0 L642.50 702.0 L642.00 703.3 L641.50 694.8 L641.00 694.4 L640.50 687.9 L640.00 685.4 L639.50 687.1 L639.00 687.2 L638.50 687.4 L638.00 687.7 L637.50 686.5 L637.00 687.8 L636.50 685.6 L636.00 687.1 L635.50 687.4 L635.00 686.5 L634.50 687.6 L634.00 687.0 L633.50 687.5 L633.00 685.9 L632.50 687.7 L632.00 687.4 L631.50 687.4 L631.00 687.0 L630.50 685.5 L630.00 685.8 L629.50 686.1 L629.00 685.6 L628.50 686.2 L628.00 687.0 L627.50 687.2 L627.00 686.1 L626.50 687.4 L626.00 687.1 L625.50 685.5 L625.00 686.8 L624.50 686.4 L624.00 687.7 L623.50 687.9 L623.00 685.8 L622.50 688.4 L622.00 688.7 L621.50 687.8 L621.00 686.5 L620.50 686.1 L620.00 686.1 L619.50 686.3 L619.00 686.3 L618.50 686.6 L618.00 686.9 L617.50 688.3 L617.00 687.6 L616.50 686.2 L616.00 688.5 L615.50 687.6 L615.00 688.8 L614.50 688.9 L614.00 687.9 L613.50 688.8 L613.00 690.0 L612.50 688.9 L612.00 688.3 L611.50 685.7 L611.00 687.5 L610.50 686.2 L610.00 687.6 L609.50 687.2 L609.00 685.8 L608.50 686.6 L608.00 687.4 L607.50 702.4 L607.00 705.9 L606.50 700.4 L606.00 700.5 L605.50 701.7 L605.00 696.8 L604.50 703.3 L604.00 703.4 L603.50 695.6 L603.00 702.4 L602.50 698.9 L602.00 695.1 L601.50 702.7 L601.00 693.3 L600.50 705.4 L600.00 701.0 L599.50 711.0 L599.00 711.0 L598.50 711.5 L598.00 695.2 L597.50 697.3 L597.00 711.7 L596.50 707.8 L596.00 708.4 L595.50 706.1 L595.00 711.9 L594.50 704.8 L594.00 697.2 L593.50 687.7 L593.00 685.4 L592.50 686.3 L592.00 687.5 L591.50 687.2 L591.00 686.9 L590.50 686.2 L590.00 686.7 L589.50 691.9 L589.00 690.3 L588.50 688.7 L588.00 692.8 L587.50 689.1 L587.00 690.5 L586.50 691.3 L586.00 691.4 L585.50 691.1 L585.00 688.5 L584.50 692.2 L584.00 693.4 L583.50 690.5 L583.00 690.7 L582.50 692.3 L582.00 689.3 L581.50 688.7 L581.00 689.5 L580.50 688.1 L580.00 689.0 L579.50 694.2 L579.00 689.4 L578.50 687.9 L578.00 694.3 L577.50 694.5 L577.00 690.5 L576.50 693.1 L576.00 691.9 L575.50 693.4 L575.00 689.4 L574.50 689.6 L574.00 693.2 L573.50 692.3 L573.00 691.2 L572.50 692.7 L572.00 692.9 L571.50 695.1 L571.00 695.7 L570.50 691.2 L570.00 694.6 L569.50 693.3 L569.00 696.1 L568.50 690.0 L568.00 689.1 L567.50 690.7 L567.00 688.8 L566.50 688.6 L566.00 687.0 L565.50 685.4 L565.00 685.8 L564.50 685.8 L564.00 686.1 L563.50 686.7 L563.00 687.8 L562.50 685.9 L562.00 687.4 L561.50 712.3 L561.00 713.4 L560.50 698.3 L560.00 715.5 L559.50 709.7 L559.00 707.8 L558.50 707.9 L558.00 703.8 L557.50 701.7 L557.00 698.2 L556.50 713.7 L556.00 698.4 L555.50 711.8 L555.00 724.2 L554.50 707.6 L554.00 705.5 L553.50 718.0 L553.00 712.2 L552.50 709.3 L552.00 722.8 L551.50 729.6 L551.00 703.0 L550.50 710.6 L550.00 718.2 L549.50 701.2 L549.00 706.5 L548.50 692.4 L548.00 687.2 L547.50 686.8 L547.00 686.1 L546.50 687.1 L546.00 686.7 L545.50 686.8 L545.00 686.7 L544.50 686.7 L544.00 686.9 L543.50 687.1 L543.00 686.7 L542.50 686.2 L542.00 686.7 L541.50 697.8 L541.00 699.8 L540.50 697.8 L540.00 705.1 L539.50 705.6 L539.00 702.6 L538.50 701.8 L538.00 705.9 L537.50 691.4 L537.00 685.5 L536.50 685.3 L536.00 685.9 L535.50 685.4 L535.00 685.4 L534.50 687.2 L534.00 687.5 L533.50 690.6 L533.00 689.3 L532.50 692.2 L532.00 692.3 L531.50 691.6 L531.00 692.1 L530.50 689.4 L530.00 691.6 L529.50 691.1 L529.00 688.1 L528.50 693.3 L528.00 691.8 L527.50 687.1 L527.00 687.0 L526.50 687.6 L526.00 685.4 L525.50 687.0 L525.00 685.7 L524.50 704.1 L524.00 702.8 L523.50 698.6 L523.00 699.3 L522.50 694.8 L522.00 698.8 L521.50 709.9 L521.00 694.5 L520.50 696.2 L520.00 696.5 L519.50 710.0 L519.00 713.9 L518.50 716.1 L518.00 710.0 L517.50 698.5 L517.00 712.5 L516.50 703.7 L516.00 694.0 L515.50 688.4 L515.00 686.8 L514.50 686.3 L514.00 687.7 L513.50 686.0 L513.00 686.2 L512.50 685.9 L512.00 685.9 L511.50 685.7 L511.00 687.2 L510.50 686.2 L510.00 687.2 L509.50 699.6 L509.00 703.9 L508.50 710.5 L508.00 710.9 L507.50 707.4 L507.00 708.6 L506.50 701.7 L506.00 704.7 L505.50 701.3 L505.00 700.4 L504.50 713.2 L504.00 702.2 L503.50 710.1 L503.00 706.1 L502.50 704.2 L502.00 705.6 L501.50 701.3 L501.00 705.7 L500.50 710.2 L500.00 714.1 L499.50 713.9 L499.00 697.1 L498.50 700.5 L498.00 699.3 L497.50 704.6 L497.00 698.7 L496.50 717.7 L496.00 697.0 L495.50 693.1 L495.00 694.6 L494.50 687.8 L494.00 686.2 L493.50 686.1 L493.00 687.8 L492.50 686.2 L492.00 686.4 L491.50 701.0 L491.00 711.2 L490.50 716.4 L490.00 704.1 L489.50 696.6 L489.00 712.0 L488.50 716.2 L488.00 696.3 L487.50 702.1 L487.00 701.1 L486.50 712.7 L486.00 707.0 L485.50 705.5 L485.00 713.2 L484.50 708.9 L484.00 702.3 L483.50 698.6 L483.00 719.3 L482.50 717.8 L482.00 722.4 L481.50 700.9 L481.00 721.1 L480.50 713.1 L480.00 698.9 L479.50 721.3 L479.00 723.7 L478.50 716.1 L478.00 712.0 L477.50 714.2 L477.00 722.0 L476.50 718.9 L476.00 702.7 L475.50 721.6 L475.00 710.2 L474.50 720.7 L474.00 710.2 L473.50 722.4 L473.00 723.4 L472.50 726.2 L472.00 705.1 L471.50 703.2 L471.00 717.4 L470.50 705.9 L470.00 723.3 L469.50 700.8 L469.00 706.2 L468.50 718.9 L468.00 704.7 L467.50 705.4 L467.00 704.5 L466.50 713.1 L466.00 708.2 L465.50 721.5 L465.00 715.1 L464.50 711.6 L464.00 705.2 L463.50 727.5 L463.00 707.1 L462.50 729.3 L462.00 714.1 L461.50 703.2 L461.00 702.2 L460.50 704.5 L460.00 702.8 L459.50 717.5 L459.00 700.3 L458.50 707.2 L458.00 705.6 L457.50 697.6 L457.00 694.6 L456.50 694.9 L456.00 688.9 L455.50 685.8 L455.00 685.9 L454.50 713.0 L454.00 700.9 L453.50 717.2 L453.00 710.2 L452.50 706.4 L452.00 709.2 L451.50 712.9 L451.00 717.4 L450.50 714.7 L450.00 697.6 L449.50 703.2 L449.00 717.9 L448.50 723.2 L448.00 708.8 L447.50 700.7 L447.00 723.9 L446.50 715.1 L446.00 698.9 L445.50 708.8 L445.00 724.6 L444.50 726.2 L444.00 710.6 L443.50 704.2 L443.00 716.1 L442.50 700.6 L442.00 724.0 L441.50 716.2 L441.00 719.1 L440.50 713.6 L440.00 724.9 L439.50 723.0 L439.00 698.6 L438.50 695.5 L438.00 696.4 L437.50 690.3 L437.00 685.4 L436.50 687.4 L436.00 686.2 L435.50 687.1 L435.00 686.2 L434.50 686.0 L434.00 686.3 L433.50 686.1 L433.00 686.9 L432.50 686.1 L432.00 686.3 L431.50 686.4 L431.00 686.9 L430.50 718.5 L430.00 722.7 L429.50 716.1 L429.00 707.8 L428.50 708.2 L428.00 700.3 L427.50 721.3 L427.00 703.7 L426.50 725.2 L426.00 722.4 L425.50 715.1 L425.00 720.6 L424.50 708.6 L424.00 719.3 L423.50 724.5 L423.00 709.0 L422.50 727.8 L422.00 726.3 L421.50 703.4 L421.00 733.9 L420.50 737.5 L420.00 728.8 L419.50 735.5 L419.00 739.2 L418.50 709.5 L418.00 727.4 L417.50 740.6 L417.00 727.9 L416.50 743.8 L416.00 710.4 L415.50 708.0 L415.00 694.7 L414.50 689.7 L414.00 687.5 L413.50 690.6 L413.00 694.7 L412.50 694.4 L412.00 697.0 L411.50 700.3 L411.00 694.7 L410.50 705.2 L410.00 702.3 L409.50 701.8 L409.00 692.0 L408.50 694.6 L408.00 694.1 L407.50 705.3 L407.00 703.8 L406.50 709.4 L406.00 693.6 L405.50 690.3 L405.00 687.6 L404.50 707.5 L404.00 712.4 L403.50 711.7 L403.00 703.1 L402.50 716.3 L402.00 697.4 L401.50 707.0 L401.00 705.4 L400.50 700.2 L400.00 707.1 L399.50 699.5 L399.00 723.5 L398.50 711.0 L398.00 713.7 L397.50 719.1 L397.00 704.7 L396.50 720.4 L396.00 726.4 L395.50 706.7 L395.00 705.1 L394.50 715.3 L394.00 709.4 L393.50 695.4 L393.00 687.0 L392.50 687.8 L392.00 687.0 L391.50 687.0 L391.00 685.9 L390.50 705.3 L390.00 694.8 L389.50 701.4 L389.00 700.2 L388.50 692.9 L388.00 696.1 L387.50 705.8 L387.00 694.1 L386.50 704.5 L386.00 701.1 L385.50 703.9 L385.00 704.6 L384.50 705.5 L384.00 704.6 L383.50 694.1 L383.00 706.5 L382.50 697.1 L382.00 699.0 L381.50 700.1 L381.00 699.9 L380.50 701.0 L380.00 700.1 L379.50 703.8 L379.00 706.8 L378.50 696.5 L378.00 698.2 L377.50 711.2 L377.00 700.2 L376.50 698.6 L376.00 698.4 L375.50 698.6 L375.00 696.2 L374.50 694.6 L374.00 688.7 L373.50 687.3 L373.00 686.2 L372.50 686.5 L372.00 686.6 L371.50 686.6 L371.00 686.0 L370.50 687.7 L370.00 686.1 L369.50 687.3 L369.00 687.4 L368.50 699.2 L368.00 710.7 L367.50 701.9 L367.00 708.9 L366.50 708.7 L366.00 711.7 L365.50 713.3 L365.00 699.2 L364.50 699.0 L364.00 699.7 L363.50 696.6 L363.00 706.3 L362.50 713.5 L362.00 697.8 L361.50 717.1 L361.00 718.6 L360.50 714.0 L360.00 706.8 L359.50 694.6 L359.00 686.0 L358.50 685.6 L358.00 686.8 L357.50 692.0 L357.00 692.1 L356.50 687.9 L356.00 693.3 L355.50 692.1 L355.00 692.2 L354.50 687.6 L354.00 689.8 L353.50 691.1 L353.00 691.7 L352.50 689.9 L352.00 690.4 L351.50 694.2 L351.00 689.8 L350.50 691.8 L350.00 687.9 L349.50 692.5 L349.00 691.1 L348.50 690.0 L348.00 688.6 L347.50 688.3 L347.00 693.6 L346.50 692.5 L346.00 687.9 L345.50 688.1 L345.00 692.5 L344.50 693.2 L344.00 688.8 L343.50 695.3 L343.00 694.0 L342.50 693.5 L342.00 695.1 L341.50 693.0 L341.00 690.3 L340.50 691.2 L340.00 694.2 L339.50 695.5 L339.00 688.9 L338.50 693.5 L338.00 693.5 L337.50 692.1 L337.00 693.2 L336.50 693.5 L336.00 688.3 L335.50 694.3 L335.00 693.6 L334.50 690.2 L334.00 695.0 L333.50 690.2 L333.00 693.5 L332.50 693.6 L332.00 693.6 L331.50 692.5 L331.00 689.6 L330.50 696.5 L330.00 690.1 L329.50 695.5 L329.00 693.9 L328.50 691.4 L328.00 694.4 L327.50 691.2 L327.00 689.6 L326.50 690.9 L326.00 689.5 L325.50 689.7 L325.00 693.1 L324.50 693.9 L324.00 689.9 L323.50 696.6 L323.00 691.9 L322.50 690.1 L322.00 692.5 L321.50 690.2 L321.00 692.1 L320.50 697.3 L320.00 693.3 L319.50 691.0 L319.00 696.9 L318.50 692.0 L318.00 697.2 L317.50 689.1 L317.00 688.8 L316.50 694.5 L316.00 689.2 L315.50 697.1 L315.00 690.1 L314.50 697.5 L314.00 697.0 L313.50 690.0 L313.00 691.7 L312.50 696.1 L312.00 692.4 L311.50 696.8 L311.00 696.4 L310.50 690.4 L310.00 691.1 L309.50 695.2 L309.00 691.8 L308.50 692.7 L308.00 692.8 L307.50 692.9 L307.00 696.3 L306.50 697.0 L306.00 695.8 L305.50 692.6 L305.00 689.2 L304.50 689.0 L304.00 692.6 L303.50 689.0 L303.00 689.1 L302.50 688.1 L302.00 689.1 L301.50 687.6 L301.00 686.6 L300.50 686.5 L300.00 686.8 L299.50 685.5 L299.00 687.1 L298.50 686.9 L298.00 687.6 L297.50 686.9 L297.00 687.8 L296.50 688.7 L296.00 693.6 L295.50 696.0 L295.00 695.8 L294.50 696.0 L294.00 690.3 L293.50 695.4 L293.00 696.4 L292.50 690.0 L292.00 690.7 L291.50 690.4 L291.00 692.8 L290.50 692.4 L290.00 697.8 L289.50 698.1 L289.00 698.1 L288.50 693.9 L288.00 697.3 L287.50 699.6 L287.00 698.7 L286.50 693.1 L286.00 694.8 L285.50 693.3 L285.00 698.3 L284.50 690.1 L284.00 690.3 L283.50 686.2 L283.00 686.5 L282.50 687.5 L282.00 686.5 L281.50 686.9 L281.00 686.6 L280.50 686.6 L280.00 686.1 L279.50 686.7 L279.00 687.2 L278.50 690.9 L278.00 695.4 L277.50 693.0 L277.00 689.5 L276.50 695.2 L276.00 695.8 L275.50 696.5 L275.00 696.6 L274.50 698.1 L274.00 693.3 L273.50 697.2 L273.00 692.5 L272.50 689.4 L272.00 691.9 L271.50 694.9 L271.00 698.6 L270.50 697.3 L270.00 695.7 L269.50 695.6 L269.00 697.2 L268.50 690.9 L268.00 691.4 L267.50 695.9 L267.00 694.7 L266.50 692.4 L266.00 698.9 L265.50 691.7 L265.00 692.4 L264.50 697.0 L264.00 699.3 L263.50 700.9 L263.00 694.0 L262.50 691.2 L262.00 689.6 L261.50 687.8 L261.00 687.8 L260.50 688.9 L260.00 691.8 L259.50 692.7 L259.00 695.1 L258.50 689.6 L258.00 693.9 L257.50 689.3 L257.00 691.2 L256.50 689.9 L256.00 693.1 L255.50 694.9 L255.00 691.6 L254.50 693.5 L254.00 694.3 L253.50 687.9 L253.00 685.5 L252.50 687.7 L252.00 687.4 L251.50 686.6 L251.00 685.9 L250.50 685.7 L250.00 687.5 L249.50 687.8 L249.00 685.6 L248.50 696.4 L248.00 689.2 L247.50 695.2 L247.00 696.2 L246.50 693.7 L246.00 690.9 L245.50 690.5 L245.00 693.5 L244.50 692.2 L244.00 696.1 L243.50 692.2 L243.00 699.9 L242.50 700.7 L242.00 692.1 L241.50 697.2 L241.00 692.0 L240.50 699.1 L240.00 691.3 L239.50 702.1 L239.00 698.6 L238.50 693.3 L238.00 696.9 L237.50 690.8 L237.00 700.7 L236.50 692.0 L236.00 692.6 L235.50 694.5 L235.00 695.9 L234.50 695.7 L234.00 691.3 L233.50 699.4 L233.00 694.5 L232.50 691.7 L232.00 690.4 L231.50 690.9 L231.00 686.8 L230.50 687.1 L230.00 687.4 L229.50 687.2 L229.00 687.5 L228.50 687.5 L228.00 686.9 L227.50 687.8 L227.00 685.6 L226.50 686.0 L226.00 687.8 L225.50 687.6 L225.00 686.2 L224.50 690.4 L224.00 688.7 L223.50 688.9 L223.00 693.6 L222.50 691.3 L222.00 695.6 L221.50 690.2 L221.00 694.3 L220.50 693.8 L220.00 689.0 L219.50 689.8 L219.00 690.5 L218.50 695.5 L218.00 691.0 L217.50 689.6 L217.00 693.3 L216.50 691.9 L216.00 695.9 L215.50 699.2 L215.00 696.2 L214.50 688.9 L214.00 688.3 L213.50 687.0 L213.00 686.1 L212.50 687.0 L212.00 685.4 L211.50 687.6 L211.00 687.6 L210.50 690.7 L210.00 690.7 L209.50 689.5 L209.00 689.6 L208.50 696.3 L208.00 692.7 L207.50 691.2 L207.00 698.8 L206.50 692.5 L206.00 690.5 L205.50 692.9 L205.00 698.0 L204.50 699.1 L204.00 701.0 L203.50 701.4 L203.00 704.2 L202.50 693.1 L202.00 690.0 L201.50 687.0 L201.00 687.0 L200.50 696.4 L200.00 706.1 L199.50 708.0 L199.00 702.5 L198.50 694.5 L198.00 702.4 L197.50 704.5 L197.00 699.0 L196.50 715.0 L196.00 706.8 L195.50 705.8 L195.00 699.3 L194.50 710.8 L194.00 703.5 L193.50 696.8 L193.00 703.7 L192.50 700.1 L192.00 699.0 L191.50 702.7 L191.00 704.4 L190.50 711.7 L190.00 701.9 L189.50 693.1Z" fill="#828282"/><path d="M792.50 683.7 L793.00 683.5 L793.50 683.5 L794.00 681.6 L794.50 680.0 L795.00 682.3 L795.50 681.9 L796.00 681.3 L796.50 681.5 L797.00 682.1 L797.50 677.0 L798.00 677.1 L798.50 680.8 L799.00 680.2 L799.50 679.6 L800.00 680.9 L800.50 682.1 L801.00 680.3 L801.50 682.3 L802.00 679.7 L802.50 653.4 L803.00 637.2 L803.50 622.0 L804.00 660.1 L804.50 653.5 L805.00 633.6 L805.50 658.3 L806.00 671.8 L806.50 656.8 L807.00 672.0 L807.50 669.9 L808.00 669.4 L808.50 659.6 L809.00 662.8 L809.50 669.3 L810.00 661.0 L810.50 669.8 L811.00 673.5 L811.50 668.4 L812.00 675.1 L812.50 675.7 L813.00 682.2 L813.50 661.1 L814.00 647.4 L814.50 637.4 L815.00 658.9 L815.50 659.3 L816.00 653.6 L816.50 662.2 L817.00 633.3 L817.50 643.4 L818.00 661.8 L818.50 650.3 L819.00 647.6 L819.50 652.4 L820.00 642.2 L820.50 663.8 L821.00 681.7 L821.50 677.5 L822.00 673.3 L822.50 672.1 L823.00 676.7 L823.50 677.4 L824.00 674.1 L824.50 672.3 L825.00 673.3 L825.50 669.3 L826.00 676.8 L826.50 673.5 L827.00 679.7 L827.50 682.2 L828.00 681.6 L828.50 679.4 L829.00 678.3 L829.50 675.6 L830.00 673.3 L830.50 675.8 L831.00 677.8 L831.50 673.5 L832.00 675.2 L832.50 679.8 L833.00 673.5 L833.50 674.3 L834.00 675.4 L834.50 679.7 L835.00 675.3 L835.50 680.0 L836.00 676.5 L836.50 678.0 L837.00 679.9 L837.50 679.5 L838.00 674.9 L838.50 675.6 L839.00 679.2 L839.50 677.2 L840.00 675.5 L840.50 678.5 L841.00 679.7 L841.50 683.7 L842.00 683.4 L842.00 684.6 L841.50 684.4 L841.00 687.7 L840.50 688.3 L840.00 687.2 L839.50 689.8 L839.00 687.5 L838.50 689.2 L838.00 687.5 L837.50 691.5 L837.00 687.8 L836.50 687.8 L836.00 690.7 L835.50 688.5 L835.00 687.2 L834.50 688.6 L834.00 691.4 L833.50 691.4 L833.00 692.0 L832.50 687.7 L832.00 692.7 L831.50 687.5 L831.00 691.4 L830.50 692.1 L830.00 688.3 L829.50 692.2 L829.00 691.1 L828.50 687.3 L828.00 686.4 L827.50 686.5 L827.00 688.1 L826.50 694.5 L826.00 689.5 L825.50 688.8 L825.00 695.0 L824.50 696.1 L824.00 695.4 L823.50 692.7 L823.00 694.8 L822.50 697.5 L822.00 693.1 L821.50 691.7 L821.00 687.0 L820.50 708.8 L820.00 703.9 L819.50 695.4 L819.00 706.0 L818.50 695.0 L818.00 709.6 L817.50 707.8 L817.00 695.2 L816.50 705.2 L816.00 713.9 L815.50 704.9 L815.00 700.0 L814.50 704.6 L814.00 713.3 L813.50 692.1 L813.00 688.0 L812.50 698.3 L812.00 697.2 L811.50 694.1 L811.00 695.3 L810.50 690.5 L810.00 700.5 L809.50 699.4 L809.00 694.0 L808.50 697.2 L808.00 697.3 L807.50 691.9 L807.00 697.4 L806.50 699.2 L806.00 693.8 L805.50 702.2 L805.00 694.4 L804.50 708.7 L804.00 698.2 L803.50 700.9 L803.00 696.7 L802.50 695.6 L802.00 687.2 L801.50 687.7 L801.00 687.5 L800.50 686.1 L800.00 686.5 L799.50 690.8 L799.00 687.1 L798.50 690.4 L798.00 687.4 L797.50 689.0 L797.00 687.1 L796.50 687.0 L796.00 687.7 L795.50 685.7 L795.00 685.8 L794.50 686.0 L794.00 685.9 L793.50 684.4 L793.00 684.4 L792.50 684.6Z" fill="#828282"/><path d="M844.00 683.6 L844.50 683.7 L845.00 682.2 L845.50 666.0 L846.00 652.2 L846.50 664.5 L847.00 653.5 L847.50 661.7 L848.00 655.8 L848.50 653.8 L849.00 670.4 L849.50 651.3 L850.00 681.7 L850.50 676.9 L851.00 676.9 L851.50 668.7 L852.00 673.4 L852.50 674.9 L853.00 667.2 L853.50 673.2 L854.00 669.8 L854.50 669.9 L855.00 682.3 L855.50 682.7 L856.00 681.7 L856.50 682.3 L857.00 682.5 L857.50 681.5 L858.00 681.9 L858.50 682.7 L859.00 682.1 L859.50 682.6 L860.00 678.0 L860.50 676.7 L861.00 672.8 L861.50 674.8 L862.00 676.5 L862.50 670.3 L863.00 670.5 L863.50 678.0 L864.00 677.8 L864.50 675.4 L865.00 674.0 L865.50 671.0 L866.00 673.7 L866.50 672.1 L867.00 676.7 L867.50 675.0 L868.00 674.9 L868.50 675.1 L869.00 675.8 L869.50 672.5 L870.00 678.6 L870.50 673.8 L871.00 670.6 L871.50 671.2 L872.00 677.8 L872.50 674.3 L873.00 673.5 L873.50 673.7 L874.00 676.3 L874.50 673.4 L875.00 676.3 L875.50 678.9 L876.00 671.7 L876.50 672.0 L877.00 682.1 L877.50 682.7 L878.00 681.4 L878.50 682.2 L879.00 678.9 L879.50 680.0 L880.00 681.1 L880.50 680.7 L881.00 678.9 L881.50 678.4 L882.00 679.1 L882.50 680.9 L883.00 678.5 L883.50 680.3 L884.00 679.3 L884.50 679.4 L885.00 681.3 L885.50 680.8 L886.00 679.8 L886.50 679.4 L887.00 680.3 L887.50 679.3 L888.00 681.6 L888.50 681.3 L889.00 681.3 L889.50 681.0 L890.00 682.3 L890.50 680.7 L891.00 681.6 L891.50 682.3 L892.00 681.7 L892.50 681.3 L893.00 681.6 L893.50 682.6 L894.00 681.3 L894.50 682.8 L895.00 681.8 L895.50 681.8 L896.00 682.8 L896.50 682.4 L897.00 682.2 L897.50 682.7 L898.00 682.8 L898.50 681.4 L899.00 682.8 L899.50 682.5 L900.00 682.3 L900.50 682.8 L901.00 682.3 L901.50 681.3 L902.00 680.7 L902.50 677.5 L903.00 678.3 L903.50 679.9 L904.00 681.1 L904.50 680.3 L905.00 678.7 L905.50 680.7 L906.00 677.1 L906.50 679.1 L907.00 679.6 L907.50 677.9 L908.00 679.8 L908.50 677.5 L909.00 678.0 L909.50 681.0 L910.00 681.1 L910.50 678.6 L911.00 679.3 L911.50 679.3 L912.00 679.2 L912.50 679.1 L913.00 681.5 L913.50 676.7 L914.00 674.9 L914.50 673.3 L915.00 653.1 L915.50 668.0 L916.00 654.6 L916.50 654.5 L917.00 658.9 L917.50 672.4 L918.00 659.3 L918.50 669.7 L919.00 661.3 L919.50 662.0 L920.00 665.1 L920.50 673.5 L921.00 658.9 L921.50 657.9 L922.00 665.6 L922.50 661.5 L923.00 671.0 L923.50 674.9 L924.00 675.6 L924.50 667.4 L925.00 682.8 L925.50 682.2 L926.00 682.3 L926.50 681.9 L927.00 681.3 L927.50 682.2 L928.00 682.5 L928.50 682.9 L929.00 681.7 L929.50 682.0 L930.00 682.8 L930.50 681.8 L931.00 682.5 L931.50 682.1 L932.00 681.5 L932.50 681.7 L933.00 682.9 L933.50 682.1 L934.00 682.4 L934.50 682.0 L935.00 681.5 L935.50 678.4 L936.00 678.9 L936.50 674.5 L937.00 679.1 L937.50 676.5 L938.00 676.5 L938.50 676.2 L939.00 679.3 L939.50 677.4 L940.00 678.1 L940.50 675.8 L941.00 679.3 L941.50 680.8 L942.00 675.9 L942.50 677.2 L943.00 678.4 L943.50 678.1 L944.00 681.1 L944.50 680.4 L945.00 682.9 L945.50 682.4 L946.00 681.4 L946.50 681.9 L947.00 681.7 L947.50 682.6 L948.00 681.9 L948.50 681.3 L949.00 682.8 L949.50 680.3 L950.00 677.3 L950.50 681.3 L951.00 677.7 L951.50 680.5 L952.00 678.1 L952.50 679.1 L953.00 678.9 L953.50 680.4 L954.00 682.1 L954.50 682.8 L955.00 682.6 L955.50 680.8 L956.00 679.1 L956.50 672.7 L957.00 677.9 L957.50 672.4 L958.00 678.1 L958.50 672.5 L959.00 674.9 L959.50 671.0 L960.00 671.9 L960.50 671.3 L961.00 675.0 L961.50 678.0 L962.00 679.1 L962.50 677.7 L963.00 672.1 L963.50 677.2 L964.00 674.3 L964.50 674.1 L965.00 676.1 L965.50 675.1 L966.00 678.7 L966.50 676.5 L967.00 677.0 L967.50 678.8 L968.00 682.6 L968.50 682.7 L969.00 683.0 L969.50 682.4 L970.00 681.3 L970.50 682.3 L971.00 683.0 L971.50 682.9 L972.00 681.5 L972.50 680.4 L973.00 675.7 L973.50 674.7 L974.00 677.1 L974.50 674.2 L975.00 677.3 L975.50 676.2 L976.00 676.8 L976.50 674.0 L977.00 680.0 L977.50 678.5 L978.00 676.1 L978.50 680.4 L979.00 681.6 L979.50 682.8 L980.00 681.8 L980.50 682.4 L981.00 682.2 L981.50 682.7 L982.00 682.9 L982.50 682.1 L983.00 681.4 L983.50 681.0 L984.00 678.0 L984.50 678.9 L985.00 679.8 L985.50 679.5 L986.00 679.6 L986.50 679.9 L987.00 681.5 L987.50 680.4 L988.00 679.9 L988.50 681.3 L989.00 683.0 L989.50 682.7 L990.00 682.1 L990.50 681.9 L991.00 681.8 L991.50 681.5 L992.00 674.6 L992.50 678.2 L993.00 667.6 L993.50 668.4 L994.00 665.5 L994.50 669.2 L995.00 677.4 L995.50 669.3 L996.00 677.0 L996.50 675.4 L997.00 668.6 L997.50 676.7 L998.00 670.9 L998.50 675.5 L999.00 674.9 L999.50 675.4 L1000.00 671.9 L1000.50 670.9 L1001.00 669.4 L1001.50 675.9 L1002.00 671.1 L1002.50 670.9 L1003.00 674.7 L1003.50 671.5 L1004.00 678.0 L1004.50 677.2 L1005.00 681.4 L1005.50 681.3 L1006.00 681.5 L1006.50 682.6 L1007.00 681.8 L1007.50 680.7 L1008.00 677.7 L1008.50 669.6 L1009.00 674.6 L1009.50 667.8 L1010.00 662.8 L1010.50 675.3 L1011.00 668.2 L1011.50 675.5 L1012.00 672.8 L1012.50 667.1 L1013.00 676.1 L1013.50 666.3 L1014.00 675.9 L1014.50 672.5 L1015.00 670.5 L1015.50 665.0 L1016.00 672.6 L1016.50 668.6 L1017.00 672.4 L1017.50 672.6 L1018.00 675.7 L1018.50 670.1 L1019.00 677.5 L1019.50 670.7 L1020.00 672.0 L1020.50 672.1 L1021.00 668.5 L1021.50 678.3 L1022.00 671.4 L1022.50 670.1 L1023.00 681.4 L1023.50 683.5 L1024.00 683.4 L1024.50 683.6 L1025.00 683.6 L1025.50 683.8 L1026.00 683.5 L1026.50 683.4 L1027.00 683.5 L1027.50 683.4 L1028.00 683.7 L1028.50 683.4 L1029.00 683.5 L1029.50 683.7 L1030.00 683.4 L1030.50 683.5 L1031.00 683.5 L1031.50 683.4 L1032.00 683.7 L1032.50 683.6 L1033.00 683.6 L1033.50 683.5 L1034.00 683.7 L1034.50 683.4 L1035.00 683.6 L1035.50 683.7 L1036.00 683.6 L1036.50 683.6 L1037.00 683.8 L1037.50 683.6 L1038.00 683.5 L1038.50 683.4 L1039.00 683.5 L1039.50 683.4 L1040.00 683.7 L1040.50 683.6 L1041.00 683.3 L1041.50 683.4 L1042.00 683.4 L1042.50 683.7 L1043.00 683.7 L1043.50 683.4 L1044.00 683.7 L1044.50 683.6 L1045.00 683.5 L1045.50 683.4 L1046.00 683.4 L1046.50 683.4 L1047.00 683.5 L1047.50 683.4 L1048.00 683.4 L1048.00 684.4 L1047.50 684.5 L1047.00 684.4 L1046.50 684.4 L1046.00 684.3 L1045.50 684.5 L1045.00 684.2 L1044.50 684.4 L1044.00 684.3 L1043.50 684.4 L1043.00 684.6 L1042.50 684.6 L1042.00 684.3 L1041.50 684.4 L1041.00 684.4 L1040.50 684.3 L1040.00 684.5 L1039.50 684.3 L1039.00 684.5 L1038.50 684.6 L1038.00 684.5 L1037.50 684.3 L1037.00 684.6 L1036.50 684.5 L1036.00 684.2 L1035.50 684.4 L1035.00 684.5 L1034.50 684.3 L1034.00 684.6 L1033.50 684.3 L1033.00 684.4 L1032.50 684.5 L1032.00 684.3 L1031.50 684.6 L1031.00 684.4 L1030.50 684.4 L1030.00 684.4 L1029.50 684.5 L1029.00 684.3 L1028.50 684.4 L1028.00 684.3 L1027.50 684.3 L1027.00 684.5 L1026.50 684.6 L1026.00 684.6 L1025.50 684.6 L1025.00 684.4 L1024.50 684.6 L1024.00 684.3 L1023.50 684.4 L1023.00 685.5 L1022.50 692.7 L1022.00 699.3 L1021.50 700.1 L1021.00 698.8 L1020.50 699.5 L1020.00 690.8 L1019.50 696.4 L1019.00 702.2 L1018.50 701.1 L1018.00 704.2 L1017.50 703.1 L1017.00 704.1 L1016.50 704.4 L1016.00 701.6 L1015.50 697.3 L1015.00 700.9 L1014.50 695.1 L1014.00 696.9 L1013.50 692.6 L1013.00 694.4 L1012.50 702.5 L1012.00 701.2 L1011.50 703.2 L1011.00 695.0 L1010.50 704.2 L1010.00 701.9 L1009.50 706.6 L1009.00 705.8 L1008.50 689.8 L1008.00 689.3 L1007.50 688.4 L1007.00 686.1 L1006.50 685.4 L1006.00 685.1 L1005.50 685.0 L1005.00 686.3 L1004.50 692.4 L1004.00 691.7 L1003.50 697.5 L1003.00 696.1 L1002.50 693.7 L1002.00 689.9 L1001.50 695.9 L1001.00 692.4 L1000.50 695.3 L1000.00 694.0 L999.50 699.2 L999.00 695.4 L998.50 700.3 L998.00 701.1 L997.50 700.9 L997.00 692.9 L996.50 700.7 L996.00 700.8 L995.50 699.4 L995.00 692.7 L994.50 696.1 L994.00 699.1 L993.50 692.1 L993.00 694.4 L992.50 692.0 L992.00 693.1 L991.50 687.8 L991.00 685.8 L990.50 685.3 L990.00 685.9 L989.50 686.2 L989.00 685.0 L988.50 688.2 L988.00 686.1 L987.50 688.7 L987.00 687.9 L986.50 686.4 L986.00 688.2 L985.50 686.2 L985.00 689.2 L984.50 690.0 L984.00 688.7 L983.50 686.1 L983.00 685.1 L982.50 685.1 L982.00 686.0 L981.50 686.4 L981.00 685.5 L980.50 685.3 L980.00 685.3 L979.50 686.1 L979.00 686.0 L978.50 694.7 L978.00 692.7 L977.50 696.3 L977.00 694.1 L976.50 696.1 L976.00 696.0 L975.50 691.7 L975.00 690.4 L974.50 700.0 L974.00 695.8 L973.50 696.8 L973.00 699.9 L972.50 692.6 L972.00 685.9 L971.50 685.9 L971.00 686.3 L970.50 685.8 L970.00 686.2 L969.50 685.6 L969.00 685.6 L968.50 686.2 L968.00 686.7 L967.50 691.0 L967.00 689.1 L966.50 689.1 L966.00 694.4 L965.50 691.2 L965.00 692.3 L964.50 688.4 L964.00 695.3 L963.50 691.0 L963.00 693.2 L962.50 688.6 L962.00 691.3 L961.50 694.3 L961.00 689.2 L960.50 689.1 L960.00 689.2 L959.50 695.4 L959.00 691.5 L958.50 691.6 L958.00 689.5 L957.50 693.1 L957.00 695.2 L956.50 694.4 L956.00 690.4 L955.50 687.1 L955.00 685.3 L954.50 685.1 L954.00 685.0 L953.50 686.7 L953.00 689.7 L952.50 686.6 L952.00 688.8 L951.50 690.1 L951.00 691.3 L950.50 688.1 L950.00 689.3 L949.50 687.2 L949.00 686.7 L948.50 685.8 L948.00 686.1 L947.50 685.4 L947.00 685.4 L946.50 686.2 L946.00 686.3 L945.50 686.5 L945.00 686.5 L944.50 691.0 L944.00 689.5 L943.50 688.4 L943.00 692.8 L942.50 688.6 L942.00 687.8 L941.50 689.2 L941.00 691.9 L940.50 694.0 L940.00 688.3 L939.50 693.9 L939.00 694.6 L938.50 691.9 L938.00 692.3 L937.50 694.3 L937.00 693.3 L936.50 690.5 L936.00 688.7 L935.50 689.8 L935.00 688.0 L934.50 686.7 L934.00 685.7 L933.50 685.9 L933.00 686.2 L932.50 685.9 L932.00 685.9 L931.50 686.6 L931.00 685.8 L930.50 685.0 L930.00 686.3 L929.50 685.5 L929.00 685.7 L928.50 685.4 L928.00 686.4 L927.50 686.6 L927.00 686.7 L926.50 686.4 L926.00 685.1 L925.50 686.2 L925.00 686.2 L924.50 698.2 L924.00 693.9 L923.50 696.7 L923.00 699.1 L922.50 703.2 L922.00 702.2 L921.50 698.5 L921.00 698.3 L920.50 698.3 L920.00 692.4 L919.50 705.5 L919.00 693.6 L918.50 702.0 L918.00 696.8 L917.50 701.5 L917.00 694.0 L916.50 704.6 L916.00 703.9 L915.50 700.2 L915.00 707.2 L914.50 700.3 L914.00 698.4 L913.50 688.4 L913.00 685.8 L912.50 687.1 L912.00 686.3 L911.50 686.8 L911.00 690.0 L910.50 689.2 L910.00 689.1 L909.50 688.3 L909.00 690.6 L908.50 689.5 L908.00 690.6 L907.50 690.1 L907.00 687.1 L906.50 687.1 L906.00 688.7 L905.50 686.6 L905.00 686.8 L904.50 691.5 L904.00 688.1 L903.50 686.8 L903.00 689.9 L902.50 690.6 L902.00 686.2 L901.50 686.4 L901.00 686.3 L900.50 685.8 L900.00 685.4 L899.50 685.3 L899.00 686.2 L898.50 685.3 L898.00 686.4 L897.50 686.5 L897.00 686.1 L896.50 686.2 L896.00 685.5 L895.50 685.9 L895.00 685.2 L894.50 686.4 L894.00 685.6 L893.50 685.4 L893.00 685.5 L892.50 685.7 L892.00 687.3 L891.50 685.9 L891.00 688.4 L890.50 688.4 L890.00 687.4 L889.50 686.5 L889.00 685.9 L888.50 687.7 L888.00 686.3 L887.50 687.9 L887.00 686.6 L886.50 686.9 L886.00 687.6 L885.50 686.4 L885.00 688.2 L884.50 687.4 L884.00 686.4 L883.50 688.9 L883.00 688.0 L882.50 688.9 L882.00 688.3 L881.50 689.5 L881.00 686.4 L880.50 686.5 L880.00 689.2 L879.50 689.9 L879.00 686.3 L878.50 687.6 L878.00 686.0 L877.50 686.1 L877.00 686.0 L876.50 689.5 L876.00 690.4 L875.50 694.6 L875.00 698.5 L874.50 696.9 L874.00 689.7 L873.50 699.2 L873.00 697.4 L872.50 698.6 L872.00 692.3 L871.50 695.5 L871.00 694.2 L870.50 698.7 L870.00 690.1 L869.50 698.8 L869.00 694.2 L868.50 698.1 L868.00 690.4 L867.50 694.8 L867.00 695.4 L866.50 701.0 L866.00 702.7 L865.50 690.9 L865.00 701.7 L864.50 702.4 L864.00 693.9 L863.50 693.0 L863.00 696.1 L862.50 698.7 L862.00 691.2 L861.50 701.6 L861.00 692.0 L860.50 691.1 L860.00 690.2 L859.50 687.5 L859.00 685.1 L858.50 686.2 L858.00 686.2 L857.50 685.2 L857.00 685.3 L856.50 685.9 L856.00 686.1 L855.50 685.4 L855.00 685.9 L854.50 691.8 L854.00 694.3 L853.50 692.8 L853.00 696.2 L852.50 694.1 L852.00 695.9 L851.50 697.8 L851.00 690.7 L850.50 694.3 L850.00 685.0 L849.50 701.5 L849.00 701.8 L848.50 692.5 L848.00 697.3 L847.50 702.7 L847.00 694.3 L846.50 699.6 L846.00 697.3 L845.50 700.8 L845.00 685.4 L844.50 684.3 L844.00 684.5Z" fill="#828282"/></svg>
<div class="a" style="left:201px;top:625px;width:213px;height:119.5px;border-radius:4px;overflow:hidden"><svg style="left:0;top:0;overflow:hidden" width="213" height="119.5" viewBox="0 0 282 158" preserveAspectRatio="none">
 <rect width="282" height="158" fill="url(#sky)"/>
 <ellipse cx="45" cy="30" rx="70" ry="14" fill="url(#haze)"/>
 <!-- haze water left -->
 <rect x="0" y="74" width="195" height="32" fill="#dacfc9"/>
 <rect x="0" y="71" width="195" height="5" fill="#c9988a" opacity="0.55"/>
 <g stroke="#b0a4a0" stroke-width="0.7" opacity="0.85">
  <path d="M8 88v18M20 85v21M32 83v23M44 81v25M56 79v27M68 77v29M80 76v30M92 75v31M104 74v30"/>
 </g>
 <!-- cables -->
 <path d="M0 90L123 34M0 94L123 38" stroke="#70483f" stroke-width="1" fill="none"/>
 <!-- tower -->
 <path d="M121.6 33.5h4v42h-4zM130.4 33.5h4v42h-4zM121.6 46h12.8v2.6h-12.8zM121.6 60h12.8v2.6h-12.8z" fill="#d35c3e"/>
 <!-- far right hills -->
 <path d="M172 72 C200 69 240 68 282 69 L282 80 L172 86z" fill="#5d6882"/>
 <!-- water right -->
 <path d="M180 82 L282 76 L282 158 L180 158z" fill="url(#water)"/>
 <path d="M192 88 C200 100 205 115 200 130 L190 135z" fill="#cfd3dc" opacity="0.45"/>
 <path d="M188 84 L222 79" stroke="#6a6468" stroke-width="2"/>
 <path d="M215 61h2.2v22h-2.2zM220 61h2.2v22h-2.2z" fill="#c8845e"/>
 <!-- rocks -->
 <path d="M0 104 C18 100 40 99 58 102 C76 105 92 109 112 106 L118 158 L0 158z" fill="url(#rock)"/>
 <path d="M0 124 C25 118 55 124 85 130 L95 158 L0 158z" fill="#7a5546" opacity="0.6"/>
 <path d="M0 140 C30 134 60 140 100 150 L100 158 L0 158z" fill="#5a4a44" opacity="0.55"/>
 <path d="M64 136 C74 132 88 134 96 142 L80 147z" fill="#9a9aa2" opacity="0.7"/>
 <path d="M12 110 C24 107 36 110 44 116 L22 119z" fill="#b07c64" opacity="0.55"/>
 <!-- shirt -->
 <path d="M104 158 L106 90 C107 82 114 78 128 75 L142 71 L165 71 L180 74 C188 76 191 82 193 96 L196 158z" fill="#141414"/>
 <!-- neck -->
 <path d="M141 60h24v14c-4 5-20 5-24 0z" fill="#b48e7e"/>
 <!-- face -->
 <path d="M135.4 42 C135.4 30 142 25.6 152 25.6 C163 25.6 169 31 169 42 L168 58 C166 68 160 73 152 73 C144 73 138 68 136 58z" fill="url(#skin)"/>
 <!-- hair -->
 <path d="M131.5 38 C131 24 140 16.8 153 16.8 C166 16.8 175 24 175 38 L169.5 36 C168 30 162 26 152 26 C143 26 137 30 135.5 36z" fill="#241b1a"/>
 <!-- headphones -->
 <rect x="127.5" y="31.6" width="10" height="29.5" rx="5" fill="#2a2828"/>
 <rect x="166.5" y="32.6" width="10" height="30.5" rx="5" fill="#2a2828"/>
 <rect x="130.5" y="34" width="4" height="9" rx="1.5" fill="#c4c4c4"/>
 <rect x="169.5" y="35" width="4" height="9" rx="1.5" fill="#c4c4c4"/>
 <path d="M139 49h27" stroke="#7b6c68" stroke-width="0.9"/>
 <!-- fist -->
 <path d="M160 98 C164 92 178 92 183 100 C186 108 182 117 174 118 C166 118 159 110 160 98z" fill="#c99d8c"/>
 <!-- arm across -->
 <path d="M108 123 C130 120 160 118 190 116 L191 130 C165 134 130 138 108 140z" fill="#bb9282"/>
 <path d="M112 146 C130 148 150 150 172 146 L176 158 L112 158z" fill="#a27a6a" opacity="0.8"/>
 <text x="132" y="113" font-family="Liberation Sans" font-size="7" fill="#c9c9c9" opacity="0.8">ngdo</text>
</svg></div>
<svg style="left:0;top:0" width="1361" height="800" viewBox="0 0 1361 800"><defs><clipPath id="thc"><rect x="201" y="625" width="213" height="119.5" rx="4"/></clipPath></defs><g clip-path="url(#thc)" opacity="0.55"><path d="M113.00 683.5 L113.50 683.7 L114.00 683.4 L114.50 683.5 L115.00 683.5 L115.50 683.8 L116.00 683.5 L116.50 683.4 L117.00 683.8 L117.50 683.7 L118.00 683.7 L118.50 683.4 L119.00 683.0 L119.50 680.2 L120.00 673.8 L120.50 676.3 L121.00 672.4 L121.50 667.1 L122.00 662.6 L122.50 667.1 L123.00 663.0 L123.50 662.5 L124.00 661.6 L124.50 665.4 L125.00 665.4 L125.50 663.6 L126.00 673.0 L126.50 669.8 L127.00 669.4 L127.50 667.7 L128.00 672.1 L128.50 665.9 L129.00 675.7 L129.50 664.8 L130.00 675.1 L130.50 675.5 L131.00 672.2 L131.50 674.4 L132.00 663.3 L132.50 676.7 L133.00 670.8 L133.50 665.0 L134.00 667.7 L134.50 670.3 L135.00 666.9 L135.50 668.2 L136.00 682.8 L136.50 682.9 L137.00 682.2 L137.50 682.8 L138.00 682.0 L138.50 682.8 L139.00 682.5 L139.50 682.3 L140.00 682.2 L140.50 681.9 L141.00 682.7 L141.50 682.6 L142.00 682.4 L142.50 682.2 L143.00 682.1 L143.50 682.8 L144.00 682.3 L144.50 683.2 L145.00 681.9 L145.50 679.8 L146.00 674.1 L146.50 666.4 L147.00 665.6 L147.50 669.1 L148.00 668.9 L148.50 664.9 L149.00 664.3 L149.50 662.1 L150.00 661.1 L150.50 661.2 L151.00 665.2 L151.50 671.0 L152.00 663.8 L152.50 664.7 L153.00 672.1 L153.50 671.6 L154.00 667.0 L154.50 663.8 L155.00 668.2 L155.50 663.9 L156.00 668.2 L156.50 664.5 L157.00 665.3 L157.50 674.8 L158.00 682.2 L158.50 682.2 L159.00 680.4 L159.50 681.3 L160.00 677.4 L160.50 674.7 L161.00 677.4 L161.50 677.1 L162.00 675.2 L162.50 678.1 L163.00 672.7 L163.50 672.5 L164.00 674.2 L164.50 673.8 L165.00 677.3 L165.50 674.2 L166.00 677.7 L166.50 674.6 L167.00 675.3 L167.50 677.7 L168.00 675.9 L168.50 679.7 L169.00 673.7 L169.50 676.5 L170.00 676.5 L170.50 676.3 L171.00 676.0 L171.50 674.3 L172.00 677.6 L172.50 677.3 L173.00 680.4 L173.50 676.0 L174.00 676.5 L174.50 677.9 L175.00 680.5 L175.50 679.7 L176.00 676.5 L176.50 679.9 L177.00 680.6 L177.50 677.3 L178.00 682.3 L178.50 683.3 L179.00 683.4 L179.50 683.6 L180.00 683.4 L180.50 683.4 L181.00 683.4 L181.50 683.4 L182.00 683.6 L182.50 683.7 L183.00 683.7 L183.50 683.4 L184.00 683.5 L184.50 683.5 L185.00 683.5 L185.50 683.8 L186.00 683.6 L186.50 683.7 L187.00 683.4 L187.50 683.7 L188.00 683.5 L188.00 684.6 L187.50 684.3 L187.00 684.3 L186.50 684.3 L186.00 684.5 L185.50 684.4 L185.00 684.4 L184.50 684.5 L184.00 684.3 L183.50 684.7 L183.00 684.5 L182.50 684.4 L182.00 684.3 L181.50 684.3 L181.00 684.6 L180.50 684.3 L180.00 684.2 L179.50 684.4 L179.00 684.3 L178.50 684.6 L178.00 685.0 L177.50 690.4 L177.00 687.1 L176.50 688.0 L176.00 688.9 L175.50 686.7 L175.00 690.4 L174.50 688.8 L174.00 688.0 L173.50 687.4 L173.00 687.6 L172.50 688.7 L172.00 686.9 L171.50 689.2 L171.00 691.3 L170.50 689.6 L170.00 690.2 L169.50 691.8 L169.00 689.5 L168.50 689.6 L168.00 688.3 L167.50 689.8 L167.00 691.7 L166.50 692.1 L166.00 692.4 L165.50 692.2 L165.00 693.6 L164.50 693.7 L164.00 692.6 L163.50 690.3 L163.00 692.1 L162.50 692.1 L162.00 690.4 L161.50 692.2 L161.00 691.5 L160.50 687.4 L160.00 688.1 L159.50 685.9 L159.00 685.7 L158.50 685.8 L158.00 685.0 L157.50 694.0 L157.00 697.0 L156.50 693.6 L156.00 691.3 L155.50 693.3 L155.00 690.5 L154.50 695.8 L154.00 696.5 L153.50 699.2 L153.00 697.2 L152.50 689.6 L152.00 691.8 L151.50 695.7 L151.00 700.4 L150.50 690.7 L150.00 696.8 L149.50 698.4 L149.00 691.0 L148.50 692.0 L148.00 698.0 L147.50 696.0 L147.00 694.0 L146.50 692.2 L146.00 692.9 L145.50 688.5 L145.00 685.9 L144.50 684.9 L144.00 685.3 L143.50 685.7 L143.00 686.2 L142.50 686.0 L142.00 684.9 L141.50 685.7 L141.00 685.7 L140.50 685.4 L140.00 685.5 L139.50 684.9 L139.00 685.1 L138.50 686.1 L138.00 685.5 L137.50 685.5 L137.00 685.7 L136.50 685.8 L136.00 685.7 L135.50 693.5 L135.00 687.7 L134.50 691.0 L134.00 692.4 L133.50 691.5 L133.00 693.4 L132.50 692.8 L132.00 688.5 L131.50 688.7 L131.00 693.2 L130.50 693.4 L130.00 694.1 L129.50 695.7 L129.00 693.9 L128.50 694.0 L128.00 695.5 L127.50 692.9 L127.00 688.7 L126.50 692.4 L126.00 695.4 L125.50 695.8 L125.00 689.4 L124.50 695.8 L124.00 694.3 L123.50 694.3 L123.00 697.4 L122.50 696.5 L122.00 690.6 L121.50 697.3 L121.00 692.9 L120.50 689.3 L120.00 687.5 L119.50 686.6 L119.00 684.9 L118.50 684.5 L118.00 684.4 L117.50 684.6 L117.00 684.5 L116.50 684.3 L116.00 684.6 L115.50 684.3 L115.00 684.3 L114.50 684.5 L114.00 684.5 L113.50 684.6 L113.00 684.2Z" fill="#6a6a6a"/><path d="M189.50 678.7 L190.00 674.3 L190.50 670.4 L191.00 652.4 L191.50 660.2 L192.00 649.6 L192.50 658.9 L193.00 651.0 L193.50 655.6 L194.00 648.0 L194.50 670.9 L195.00 656.9 L195.50 654.5 L196.00 660.2 L196.50 663.5 L197.00 650.1 L197.50 655.8 L198.00 657.8 L198.50 669.9 L199.00 656.0 L199.50 666.9 L200.00 663.9 L200.50 664.8 L201.00 681.1 L201.50 678.0 L202.00 668.8 L202.50 668.3 L203.00 653.0 L203.50 670.6 L204.00 659.6 L204.50 653.3 L205.00 657.9 L205.50 660.3 L206.00 655.4 L206.50 669.7 L207.00 662.5 L207.50 673.4 L208.00 665.1 L208.50 661.1 L209.00 662.3 L209.50 666.5 L210.00 665.0 L210.50 666.4 L211.00 681.6 L211.50 680.8 L212.00 681.6 L212.50 680.6 L213.00 682.3 L213.50 680.7 L214.00 673.4 L214.50 664.5 L215.00 658.6 L215.50 660.2 L216.00 663.3 L216.50 661.2 L217.00 662.1 L217.50 666.0 L218.00 672.7 L218.50 673.9 L219.00 661.0 L219.50 665.5 L220.00 669.7 L220.50 668.1 L221.00 665.6 L221.50 671.2 L222.00 672.7 L222.50 676.1 L223.00 666.6 L223.50 666.0 L224.00 667.5 L224.50 668.4 L225.00 680.9 L225.50 682.5 L226.00 682.2 L226.50 680.5 L227.00 680.9 L227.50 682.4 L228.00 681.3 L228.50 682.4 L229.00 681.1 L229.50 681.8 L230.00 681.1 L230.50 677.9 L231.00 671.8 L231.50 672.3 L232.00 671.6 L232.50 656.7 L233.00 647.2 L233.50 649.0 L234.00 646.4 L234.50 667.9 L235.00 664.8 L235.50 658.4 L236.00 647.4 L236.50 656.6 L237.00 668.9 L237.50 650.1 L238.00 669.6 L238.50 670.2 L239.00 669.1 L239.50 657.6 L240.00 655.4 L240.50 656.2 L241.00 669.4 L241.50 669.8 L242.00 654.8 L242.50 655.7 L243.00 658.3 L243.50 653.7 L244.00 664.5 L244.50 651.0 L245.00 669.3 L245.50 662.0 L246.00 672.5 L246.50 659.1 L247.00 660.1 L247.50 667.9 L248.00 659.1 L248.50 658.6 L249.00 680.5 L249.50 681.9 L250.00 680.9 L250.50 681.3 L251.00 680.5 L251.50 682.0 L252.00 680.2 L252.50 682.3 L253.00 680.5 L253.50 674.2 L254.00 675.3 L254.50 660.0 L255.00 660.8 L255.50 671.4 L256.00 666.1 L256.50 667.8 L257.00 672.5 L257.50 664.5 L258.00 676.8 L258.50 668.5 L259.00 674.7 L259.50 671.7 L260.00 670.8 L260.50 672.2 L261.00 680.5 L261.50 680.2 L262.00 680.2 L262.50 675.2 L263.00 667.0 L263.50 666.7 L264.00 664.8 L264.50 664.8 L265.00 666.6 L265.50 664.8 L266.00 663.3 L266.50 661.9 L267.00 671.0 L267.50 664.0 L268.00 669.1 L268.50 675.5 L269.00 665.7 L269.50 664.5 L270.00 664.7 L270.50 662.8 L271.00 672.2 L271.50 664.0 L272.00 673.8 L272.50 676.3 L273.00 667.1 L273.50 669.2 L274.00 670.6 L274.50 674.7 L275.00 671.1 L275.50 672.7 L276.00 675.8 L276.50 670.7 L277.00 668.6 L277.50 669.4 L278.00 666.5 L278.50 671.8 L279.00 680.5 L279.50 682.6 L280.00 681.9 L280.50 680.5 L281.00 682.0 L281.50 682.3 L282.00 681.5 L282.50 681.9 L283.00 680.7 L283.50 681.7 L284.00 678.7 L284.50 670.1 L285.00 668.3 L285.50 664.4 L286.00 665.6 L286.50 671.5 L287.00 668.7 L287.50 670.7 L288.00 677.0 L288.50 667.5 L289.00 675.6 L289.50 673.5 L290.00 676.2 L290.50 672.9 L291.00 666.5 L291.50 671.7 L292.00 677.3 L292.50 676.4 L293.00 677.1 L293.50 670.6 L294.00 674.1 L294.50 672.6 L295.00 673.3 L295.50 678.7 L296.00 677.4 L296.50 670.2 L297.00 681.3 L297.50 681.3 L298.00 681.2 L298.50 681.4 L299.00 682.3 L299.50 682.6 L300.00 681.9 L300.50 679.9 L301.00 680.4 L301.50 681.8 L302.00 677.9 L302.50 678.1 L303.00 681.0 L303.50 677.3 L304.00 677.2 L304.50 677.8 L305.00 678.1 L305.50 674.3 L306.00 677.8 L306.50 674.4 L307.00 675.6 L307.50 672.1 L308.00 673.9 L308.50 675.1 L309.00 677.8 L309.50 678.5 L310.00 673.2 L310.50 674.1 L311.00 671.6 L311.50 673.1 L312.00 672.7 L312.50 676.5 L313.00 673.2 L313.50 678.6 L314.00 673.2 L314.50 670.2 L315.00 673.2 L315.50 678.2 L316.00 674.0 L316.50 675.0 L317.00 670.4 L317.50 671.4 L318.00 671.2 L318.50 679.0 L319.00 675.3 L319.50 675.6 L320.00 674.7 L320.50 677.8 L321.00 674.5 L321.50 674.5 L322.00 674.1 L322.50 674.1 L323.00 673.0 L323.50 674.2 L324.00 674.4 L324.50 674.8 L325.00 679.1 L325.50 671.8 L326.00 675.7 L326.50 671.9 L327.00 671.8 L327.50 674.5 L328.00 676.4 L328.50 672.2 L329.00 676.9 L329.50 677.7 L330.00 678.9 L330.50 679.6 L331.00 677.1 L331.50 677.5 L332.00 674.3 L332.50 674.0 L333.00 675.0 L333.50 679.5 L334.00 671.9 L334.50 674.6 L335.00 679.1 L335.50 674.6 L336.00 675.0 L336.50 676.2 L337.00 674.4 L337.50 678.5 L338.00 674.0 L338.50 679.2 L339.00 679.9 L339.50 672.5 L340.00 675.3 L340.50 672.6 L341.00 678.4 L341.50 679.4 L342.00 677.3 L342.50 674.1 L343.00 678.5 L343.50 672.9 L344.00 673.0 L344.50 678.8 L345.00 675.1 L345.50 674.7 L346.00 678.9 L346.50 678.6 L347.00 677.7 L347.50 679.3 L348.00 673.7 L348.50 675.4 L349.00 675.1 L349.50 677.6 L350.00 678.5 L350.50 678.8 L351.00 680.3 L351.50 679.2 L352.00 679.7 L352.50 674.6 L353.00 674.2 L353.50 674.3 L354.00 673.9 L354.50 678.1 L355.00 679.5 L355.50 674.2 L356.00 679.7 L356.50 678.2 L357.00 677.3 L357.50 678.4 L358.00 682.5 L358.50 680.5 L359.00 681.0 L359.50 671.1 L360.00 662.4 L360.50 632.1 L361.00 637.3 L361.50 635.5 L362.00 653.3 L362.50 650.0 L363.00 642.9 L363.50 640.6 L364.00 658.2 L364.50 641.3 L365.00 655.2 L365.50 634.8 L366.00 654.5 L366.50 663.5 L367.00 640.8 L367.50 640.3 L368.00 654.2 L368.50 657.2 L369.00 680.8 L369.50 681.7 L370.00 682.3 L370.50 680.2 L371.00 681.0 L371.50 680.7 L372.00 680.8 L372.50 680.7 L373.00 681.2 L373.50 675.4 L374.00 667.5 L374.50 671.0 L375.00 645.4 L375.50 639.0 L376.00 648.9 L376.50 646.3 L377.00 637.6 L377.50 630.8 L378.00 660.4 L378.50 639.5 L379.00 637.8 L379.50 650.3 L380.00 636.2 L380.50 654.0 L381.00 638.7 L381.50 634.4 L382.00 641.7 L382.50 649.2 L383.00 644.4 L383.50 644.6 L384.00 648.7 L384.50 656.0 L385.00 654.3 L385.50 652.2 L386.00 665.4 L386.50 636.5 L387.00 653.8 L387.50 655.0 L388.00 644.8 L388.50 644.9 L389.00 645.3 L389.50 650.9 L390.00 661.9 L390.50 645.9 L391.00 682.1 L391.50 680.2 L392.00 681.6 L392.50 681.2 L393.00 682.2 L393.50 675.1 L394.00 674.3 L394.50 660.8 L395.00 667.6 L395.50 669.0 L396.00 670.0 L396.50 667.4 L397.00 655.2 L397.50 650.1 L398.00 670.0 L398.50 669.8 L399.00 657.1 L399.50 669.3 L400.00 669.1 L400.50 669.5 L401.00 671.5 L401.50 654.2 L402.00 669.5 L402.50 654.8 L403.00 657.3 L403.50 661.2 L404.00 657.4 L404.50 664.9 L405.00 680.8 L405.50 679.1 L406.00 675.3 L406.50 673.3 L407.00 667.3 L407.50 663.7 L408.00 663.5 L408.50 670.0 L409.00 669.0 L409.50 668.4 L410.00 670.5 L410.50 663.4 L411.00 676.1 L411.50 669.3 L412.00 673.5 L412.50 670.1 L413.00 666.4 L413.50 676.8 L414.00 681.3 L414.50 677.6 L415.00 666.7 L415.50 659.8 L416.00 651.1 L416.50 660.0 L417.00 639.4 L417.50 650.6 L418.00 657.9 L418.50 643.8 L419.00 644.4 L419.50 665.9 L420.00 665.1 L420.50 653.0 L421.00 657.5 L421.50 665.3 L422.00 656.4 L422.50 664.6 L423.00 643.2 L423.50 645.0 L424.00 644.1 L424.50 650.3 L425.00 660.3 L425.50 652.5 L426.00 658.0 L426.50 662.1 L427.00 669.5 L427.50 654.1 L428.00 668.3 L428.50 657.0 L429.00 650.3 L429.50 665.0 L430.00 669.6 L430.50 667.0 L431.00 680.6 L431.50 681.0 L432.00 682.6 L432.50 680.5 L433.00 682.2 L433.50 680.9 L434.00 680.4 L434.50 681.8 L435.00 680.9 L435.50 680.3 L436.00 682.3 L436.50 680.5 L437.00 682.6 L437.50 676.0 L438.00 675.6 L438.50 653.2 L439.00 659.2 L439.50 664.9 L440.00 633.2 L440.50 655.0 L441.00 651.8 L441.50 632.9 L442.00 645.7 L442.50 642.9 L443.00 664.0 L443.50 633.0 L444.00 639.1 L444.50 644.6 L445.00 638.9 L445.50 664.2 L446.00 649.4 L446.50 664.5 L447.00 666.9 L447.50 660.0 L448.00 660.3 L448.50 644.9 L449.00 667.6 L449.50 657.3 L450.00 643.9 L450.50 649.3 L451.00 664.4 L451.50 645.5 L452.00 669.0 L452.50 655.4 L453.00 665.2 L453.50 658.0 L454.00 661.7 L454.50 663.9 L455.00 680.2 L455.50 679.3 L456.00 672.9 L456.50 676.1 L457.00 665.0 L457.50 670.4 L458.00 656.7 L458.50 657.2 L459.00 644.9 L459.50 645.5 L460.00 660.4 L460.50 640.1 L461.00 637.0 L461.50 639.8 L462.00 630.7 L462.50 658.6 L463.00 653.7 L463.50 633.1 L464.00 651.6 L464.50 663.7 L465.00 662.9 L465.50 638.4 L466.00 662.4 L466.50 649.9 L467.00 656.8 L467.50 645.6 L468.00 639.9 L468.50 641.1 L469.00 649.1 L469.50 660.1 L470.00 640.0 L470.50 661.4 L471.00 640.0 L471.50 642.0 L472.00 654.2 L472.50 655.3 L473.00 634.3 L473.50 645.4 L474.00 644.2 L474.50 640.8 L475.00 641.6 L475.50 632.6 L476.00 634.5 L476.50 647.8 L477.00 646.3 L477.50 657.1 L478.00 635.4 L478.50 663.4 L479.00 645.6 L479.50 636.0 L480.00 644.5 L480.50 647.2 L481.00 666.9 L481.50 666.9 L482.00 665.8 L482.50 638.1 L483.00 643.2 L483.50 640.2 L484.00 658.3 L484.50 638.3 L485.00 646.9 L485.50 643.7 L486.00 668.3 L486.50 658.0 L487.00 654.6 L487.50 649.2 L488.00 666.5 L488.50 650.7 L489.00 664.9 L489.50 654.2 L490.00 663.6 L490.50 641.9 L491.00 660.3 L491.50 645.7 L492.00 682.0 L492.50 682.2 L493.00 680.5 L493.50 681.4 L494.00 680.9 L494.50 678.1 L495.00 664.2 L495.50 661.1 L496.00 655.1 L496.50 644.3 L497.00 657.2 L497.50 646.7 L498.00 651.7 L498.50 661.4 L499.00 662.2 L499.50 643.8 L500.00 664.0 L500.50 667.6 L501.00 646.8 L501.50 668.8 L502.00 664.6 L502.50 663.8 L503.00 667.0 L503.50 658.5 L504.00 664.2 L504.50 657.5 L505.00 663.3 L505.50 655.8 L506.00 657.4 L506.50 670.8 L507.00 659.1 L507.50 649.8 L508.00 663.4 L508.50 665.0 L509.00 663.7 L509.50 670.6 L510.00 680.2 L510.50 680.8 L511.00 682.0 L511.50 681.3 L512.00 681.0 L512.50 681.9 L513.00 682.4 L513.50 680.8 L514.00 682.2 L514.50 680.4 L515.00 681.0 L515.50 670.2 L516.00 672.5 L516.50 657.1 L517.00 655.2 L517.50 666.3 L518.00 649.6 L518.50 657.1 L519.00 667.2 L519.50 644.7 L520.00 665.0 L520.50 665.3 L521.00 653.8 L521.50 660.7 L522.00 651.9 L522.50 670.2 L523.00 656.2 L523.50 655.0 L524.00 671.4 L524.50 665.4 L525.00 680.2 L525.50 682.6 L526.00 681.0 L526.50 681.9 L527.00 680.3 L527.50 682.3 L528.00 679.3 L528.50 674.5 L529.00 679.0 L529.50 674.3 L530.00 678.8 L530.50 680.4 L531.00 676.0 L531.50 679.6 L532.00 677.1 L532.50 677.8 L533.00 678.3 L533.50 676.6 L534.00 677.4 L534.50 681.2 L535.00 681.3 L535.50 680.5 L536.00 681.5 L536.50 681.9 L537.00 682.0 L537.50 669.4 L538.00 675.0 L538.50 666.9 L539.00 672.4 L539.50 671.6 L540.00 670.7 L540.50 676.6 L541.00 677.1 L541.50 672.8 L542.00 682.0 L542.50 682.2 L543.00 682.5 L543.50 680.3 L544.00 682.3 L544.50 681.5 L545.00 681.5 L545.50 682.6 L546.00 681.7 L546.50 680.6 L547.00 682.0 L547.50 682.3 L548.00 682.2 L548.50 678.2 L549.00 664.1 L549.50 657.5 L550.00 643.2 L550.50 659.9 L551.00 666.1 L551.50 669.4 L552.00 654.7 L552.50 647.2 L553.00 653.1 L553.50 647.6 L554.00 659.1 L554.50 659.2 L555.00 654.0 L555.50 662.1 L556.00 659.4 L556.50 654.8 L557.00 651.6 L557.50 660.2 L558.00 668.0 L558.50 662.6 L559.00 657.8 L559.50 657.4 L560.00 668.2 L560.50 671.1 L561.00 659.5 L561.50 660.1 L562.00 682.4 L562.50 680.8 L563.00 682.3 L563.50 681.2 L564.00 680.9 L564.50 681.5 L565.00 681.1 L565.50 682.3 L566.00 681.7 L566.50 679.7 L567.00 679.6 L567.50 676.8 L568.00 677.4 L568.50 676.1 L569.00 677.9 L569.50 677.0 L570.00 673.6 L570.50 675.1 L571.00 676.8 L571.50 675.4 L572.00 677.4 L572.50 675.6 L573.00 673.1 L573.50 674.8 L574.00 674.5 L574.50 675.0 L575.00 679.8 L575.50 673.7 L576.00 674.2 L576.50 673.4 L577.00 678.7 L577.50 673.6 L578.00 677.8 L578.50 674.5 L579.00 676.9 L579.50 677.7 L580.00 676.7 L580.50 680.2 L581.00 677.4 L581.50 679.8 L582.00 674.5 L582.50 674.7 L583.00 677.6 L583.50 676.6 L584.00 676.1 L584.50 678.1 L585.00 675.3 L585.50 676.4 L586.00 679.0 L586.50 675.2 L587.00 677.6 L587.50 676.8 L588.00 676.6 L588.50 677.2 L589.00 679.6 L589.50 677.3 L590.00 682.7 L590.50 682.6 L591.00 680.7 L591.50 681.6 L592.00 682.1 L592.50 680.9 L593.00 681.5 L593.50 680.8 L594.00 672.7 L594.50 670.1 L595.00 671.7 L595.50 651.9 L596.00 659.2 L596.50 658.5 L597.00 648.7 L597.50 661.9 L598.00 656.8 L598.50 661.3 L599.00 653.7 L599.50 658.5 L600.00 660.4 L600.50 661.1 L601.00 669.1 L601.50 672.8 L602.00 671.8 L602.50 672.1 L603.00 672.5 L603.50 672.6 L604.00 672.2 L604.50 673.9 L605.00 666.8 L605.50 666.9 L606.00 664.7 L606.50 674.4 L607.00 664.3 L607.50 666.8 L608.00 682.2 L608.50 681.6 L609.00 680.9 L609.50 680.7 L610.00 681.1 L610.50 681.1 L611.00 680.3 L611.50 681.6 L612.00 680.5 L612.50 679.3 L613.00 679.0 L613.50 679.0 L614.00 678.8 L614.50 680.0 L615.00 678.6 L615.50 680.4 L616.00 680.3 L616.50 679.7 L617.00 679.1 L617.50 678.8 L618.00 679.4 L618.50 682.0 L619.00 682.1 L619.50 680.4 L620.00 679.9 L620.50 681.0 L621.00 680.1 L621.50 681.1 L622.00 679.4 L622.50 680.9 L623.00 680.1 L623.50 679.7 L624.00 682.1 L624.50 681.8 L625.00 682.6 L625.50 681.0 L626.00 681.5 L626.50 682.4 L627.00 681.0 L627.50 681.8 L628.00 681.7 L628.50 682.5 L629.00 680.9 L629.50 680.8 L630.00 682.6 L630.50 680.4 L631.00 681.9 L631.50 681.8 L632.00 681.8 L632.50 681.6 L633.00 681.4 L633.50 682.4 L634.00 682.6 L634.50 682.5 L635.00 681.0 L635.50 680.2 L636.00 681.0 L636.50 682.3 L637.00 681.9 L637.50 680.7 L638.00 680.7 L638.50 680.5 L639.00 681.5 L639.50 680.2 L640.00 681.7 L640.50 679.4 L641.00 675.6 L641.50 676.5 L642.00 664.7 L642.50 667.8 L643.00 673.1 L643.50 673.4 L644.00 673.0 L644.50 676.4 L645.00 676.6 L645.50 669.0 L646.00 667.8 L646.50 672.1 L647.00 673.1 L647.50 672.7 L648.00 677.2 L648.50 677.1 L649.00 673.4 L649.50 671.4 L650.00 676.3 L650.50 675.4 L651.00 678.1 L651.50 678.4 L652.00 681.2 L652.50 681.0 L653.00 680.8 L653.50 675.0 L654.00 662.5 L654.50 656.5 L655.00 645.4 L655.50 667.0 L656.00 664.8 L656.50 643.1 L657.00 647.2 L657.50 654.1 L658.00 662.1 L658.50 657.9 L659.00 661.8 L659.50 653.6 L660.00 644.2 L660.50 650.6 L661.00 650.2 L661.50 666.1 L662.00 657.4 L662.50 650.9 L663.00 654.9 L663.50 666.9 L664.00 657.2 L664.50 666.7 L665.00 651.0 L665.50 669.7 L666.00 669.3 L666.50 667.1 L667.00 682.5 L667.50 682.3 L668.00 680.6 L668.50 681.9 L669.00 682.2 L669.50 680.0 L670.00 679.5 L670.50 679.2 L671.00 679.7 L671.50 679.9 L672.00 680.2 L672.50 682.0 L673.00 681.7 L673.50 682.2 L674.00 680.5 L674.50 681.9 L675.00 682.2 L675.50 679.8 L676.00 680.2 L676.50 682.0 L677.00 682.2 L677.50 681.5 L678.00 680.9 L678.50 681.1 L679.00 682.1 L679.50 680.2 L680.00 681.4 L680.50 680.9 L681.00 682.3 L681.50 682.5 L682.00 682.1 L682.50 682.5 L683.00 681.6 L683.50 681.9 L684.00 681.2 L684.50 680.9 L685.00 682.3 L685.50 680.5 L686.00 671.4 L686.50 670.9 L687.00 653.2 L687.50 658.8 L688.00 658.2 L688.50 667.0 L689.00 650.8 L689.50 661.9 L690.00 660.5 L690.50 653.3 L691.00 658.4 L691.50 659.7 L692.00 654.6 L692.50 664.3 L693.00 666.2 L693.50 666.6 L694.00 661.5 L694.50 662.2 L695.00 662.0 L695.50 664.2 L696.00 660.8 L696.50 673.6 L697.00 665.8 L697.50 673.1 L698.00 660.4 L698.50 667.2 L699.00 674.9 L699.50 664.5 L700.00 680.6 L700.50 681.4 L701.00 679.5 L701.50 677.6 L702.00 674.9 L702.50 674.0 L703.00 677.6 L703.50 670.1 L704.00 674.8 L704.50 674.6 L705.00 677.6 L705.50 672.7 L706.00 675.6 L706.50 670.1 L707.00 671.6 L707.50 670.3 L708.00 670.0 L708.50 669.2 L709.00 671.1 L709.50 673.3 L710.00 673.6 L710.50 675.5 L711.00 676.4 L711.50 668.6 L712.00 668.3 L712.50 670.4 L713.00 671.5 L713.50 668.2 L714.00 672.4 L714.50 673.3 L715.00 671.7 L715.50 674.4 L716.00 670.0 L716.50 672.0 L717.00 671.5 L717.50 677.8 L718.00 674.1 L718.50 678.8 L719.00 676.2 L719.50 676.7 L720.00 675.6 L720.50 674.9 L721.00 676.1 L721.50 675.2 L722.00 673.3 L722.50 677.6 L723.00 674.6 L723.50 675.4 L724.00 672.0 L724.50 678.1 L725.00 681.4 L725.50 681.1 L726.00 682.6 L726.50 680.9 L727.00 682.3 L727.50 677.6 L728.00 677.4 L728.50 666.9 L729.00 664.7 L729.50 656.8 L730.00 667.3 L730.50 658.9 L731.00 662.4 L731.50 646.3 L732.00 668.9 L732.50 656.0 L733.00 650.6 L733.50 647.5 L734.00 661.7 L734.50 666.5 L735.00 656.5 L735.50 662.9 L736.00 658.7 L736.50 656.3 L737.00 648.3 L737.50 653.4 L738.00 651.7 L738.50 668.8 L739.00 654.8 L739.50 665.5 L740.00 654.4 L740.50 663.0 L741.00 656.6 L741.50 661.6 L742.00 649.6 L742.50 657.4 L743.00 670.8 L743.50 658.4 L744.00 672.5 L744.50 668.5 L745.00 659.7 L745.50 657.8 L746.00 652.9 L746.50 669.1 L747.00 672.6 L747.50 655.3 L748.00 681.6 L748.50 681.6 L749.00 681.5 L749.50 678.8 L750.00 678.0 L750.50 677.7 L751.00 674.0 L751.50 677.5 L752.00 669.2 L752.50 675.9 L753.00 673.6 L753.50 669.4 L754.00 667.1 L754.50 669.9 L755.00 668.6 L755.50 676.6 L756.00 672.7 L756.50 668.2 L757.00 672.3 L757.50 674.7 L758.00 677.9 L758.50 670.2 L759.00 676.2 L759.50 672.9 L760.00 668.7 L760.50 669.0 L761.00 674.7 L761.50 672.2 L762.00 677.5 L762.50 671.0 L763.00 677.7 L763.50 673.2 L764.00 673.4 L764.50 678.5 L765.00 674.1 L765.50 677.9 L766.00 671.8 L766.50 676.6 L767.00 674.8 L767.50 675.0 L768.00 676.7 L768.50 677.5 L769.00 676.2 L769.50 677.2 L770.00 675.7 L770.50 676.7 L771.00 673.7 L771.50 671.4 L772.00 674.3 L772.50 670.6 L773.00 674.9 L773.50 679.0 L774.00 673.2 L774.50 678.7 L775.00 677.3 L775.50 673.9 L776.00 677.1 L776.50 673.3 L777.00 677.7 L777.50 678.6 L778.00 680.2 L778.50 683.7 L779.00 683.8 L779.50 683.6 L780.00 683.4 L780.50 683.4 L781.00 683.6 L781.50 683.4 L782.00 683.5 L782.50 683.5 L783.00 683.4 L783.50 683.8 L784.00 683.4 L784.50 683.4 L785.00 683.5 L785.50 683.7 L786.00 683.5 L786.50 683.5 L787.00 683.7 L787.50 683.6 L788.00 683.6 L788.50 683.4 L789.00 683.6 L789.50 683.7 L790.00 683.7 L790.50 683.7 L791.00 683.7 L791.00 684.4 L790.50 684.3 L790.00 684.6 L789.50 684.6 L789.00 684.5 L788.50 684.3 L788.00 684.5 L787.50 684.3 L787.00 684.3 L786.50 684.5 L786.00 684.6 L785.50 684.6 L785.00 684.3 L784.50 684.6 L784.00 684.5 L783.50 684.5 L783.00 684.6 L782.50 684.7 L782.00 684.6 L781.50 684.4 L781.00 684.5 L780.50 684.3 L780.00 684.3 L779.50 684.3 L779.00 684.5 L778.50 684.6 L778.00 686.0 L777.50 689.8 L777.00 692.7 L776.50 695.5 L776.00 695.8 L775.50 692.8 L775.00 694.7 L774.50 692.2 L774.00 689.3 L773.50 691.0 L773.00 693.8 L772.50 692.1 L772.00 689.4 L771.50 690.0 L771.00 692.6 L770.50 695.2 L770.00 696.9 L769.50 692.6 L769.00 689.5 L768.50 695.9 L768.00 691.6 L767.50 696.1 L767.00 692.6 L766.50 693.6 L766.00 694.3 L765.50 692.9 L765.00 697.7 L764.50 697.3 L764.00 698.2 L763.50 693.4 L763.00 695.4 L762.50 697.7 L762.00 693.6 L761.50 689.9 L761.00 690.9 L760.50 690.3 L760.00 695.5 L759.50 690.2 L759.00 690.6 L758.50 696.3 L758.00 697.4 L757.50 689.9 L757.00 690.4 L756.50 690.1 L756.00 698.6 L755.50 696.9 L755.00 694.6 L754.50 697.1 L754.00 691.7 L753.50 698.0 L753.00 694.1 L752.50 696.0 L752.00 691.2 L751.50 689.8 L751.00 689.0 L750.50 689.5 L750.00 690.8 L749.50 688.6 L749.00 686.9 L748.50 685.6 L748.00 687.1 L747.50 702.7 L747.00 702.6 L746.50 696.2 L746.00 707.4 L745.50 707.4 L745.00 701.6 L744.50 692.7 L744.00 705.9 L743.50 700.4 L743.00 700.5 L742.50 695.1 L742.00 710.2 L741.50 700.2 L741.00 699.6 L740.50 701.6 L740.00 707.1 L739.50 697.2 L739.00 709.5 L738.50 698.1 L738.00 703.6 L737.50 700.1 L737.00 699.1 L736.50 706.6 L736.00 697.1 L735.50 713.6 L735.00 701.5 L734.50 702.8 L734.00 697.8 L733.50 696.8 L733.00 696.3 L732.50 708.5 L732.00 701.5 L731.50 715.5 L731.00 715.5 L730.50 697.1 L730.00 695.6 L729.50 694.4 L729.00 699.8 L728.50 693.7 L728.00 692.4 L727.50 686.4 L727.00 686.4 L726.50 686.0 L726.00 685.5 L725.50 686.0 L725.00 687.6 L724.50 688.3 L724.00 695.3 L723.50 695.2 L723.00 692.5 L722.50 689.5 L722.00 693.3 L721.50 692.2 L721.00 695.9 L720.50 696.0 L720.00 694.3 L719.50 693.3 L719.00 691.8 L718.50 693.1 L718.00 695.8 L717.50 694.7 L717.00 694.7 L716.50 690.9 L716.00 694.7 L715.50 695.2 L715.00 694.8 L714.50 695.1 L714.00 689.4 L713.50 690.0 L713.00 695.0 L712.50 693.6 L712.00 696.1 L711.50 696.1 L711.00 694.6 L710.50 695.4 L710.00 690.8 L709.50 691.3 L709.00 692.8 L708.50 692.6 L708.00 695.0 L707.50 692.1 L707.00 694.2 L706.50 697.7 L706.00 694.2 L705.50 692.3 L705.00 694.9 L704.50 700.0 L704.00 692.1 L703.50 696.2 L703.00 689.4 L702.50 692.7 L702.00 692.0 L701.50 689.6 L701.00 686.2 L700.50 687.1 L700.00 687.1 L699.50 698.0 L699.00 695.8 L698.50 705.8 L698.00 699.5 L697.50 701.6 L697.00 703.7 L696.50 704.5 L696.00 697.8 L695.50 699.1 L695.00 694.1 L694.50 704.0 L694.00 704.3 L693.50 703.4 L693.00 695.2 L692.50 711.0 L692.00 708.8 L691.50 707.6 L691.00 698.3 L690.50 696.4 L690.00 698.3 L689.50 695.2 L689.00 711.1 L688.50 703.7 L688.00 697.1 L687.50 701.1 L687.00 694.7 L686.50 698.2 L686.00 697.1 L685.50 687.7 L685.00 687.0 L684.50 687.0 L684.00 687.3 L683.50 686.7 L683.00 687.7 L682.50 686.6 L682.00 686.8 L681.50 685.9 L681.00 685.9 L680.50 686.6 L680.00 687.8 L679.50 686.4 L679.00 685.5 L678.50 687.4 L678.00 686.0 L677.50 687.9 L677.00 687.0 L676.50 688.0 L676.00 685.7 L675.50 686.0 L675.00 688.4 L674.50 687.0 L674.00 687.6 L673.50 688.4 L673.00 687.9 L672.50 688.5 L672.00 688.3 L671.50 685.9 L671.00 688.9 L670.50 686.7 L670.00 686.4 L669.50 687.9 L669.00 686.9 L668.50 687.0 L668.00 686.6 L667.50 685.7 L667.00 687.3 L666.50 703.6 L666.00 715.0 L665.50 710.3 L665.00 712.4 L664.50 718.5 L664.00 713.2 L663.50 715.4 L663.00 716.7 L662.50 709.6 L662.00 721.6 L661.50 719.4 L661.00 699.9 L660.50 708.7 L660.00 713.7 L659.50 723.2 L659.00 703.1 L658.50 720.0 L658.00 702.9 L657.50 727.7 L657.00 720.9 L656.50 705.1 L656.00 711.2 L655.50 731.7 L655.00 727.7 L654.50 717.1 L654.00 694.9 L653.50 689.1 L653.00 686.3 L652.50 687.6 L652.00 686.4 L651.50 697.7 L651.00 690.3 L650.50 696.0 L650.00 700.9 L649.50 699.3 L649.00 700.0 L648.50 693.8 L648.00 699.8 L647.50 702.0 L647.00 692.7 L646.50 702.8 L646.00 695.9 L645.50 698.2 L645.00 694.1 L644.50 706.4 L644.00 701.5 L643.50 703.6 L643.00 701.0 L642.50 702.0 L642.00 703.3 L641.50 694.8 L641.00 694.4 L640.50 687.9 L640.00 685.4 L639.50 687.1 L639.00 687.2 L638.50 687.4 L638.00 687.7 L637.50 686.5 L637.00 687.8 L636.50 685.6 L636.00 687.1 L635.50 687.4 L635.00 686.5 L634.50 687.6 L634.00 687.0 L633.50 687.5 L633.00 685.9 L632.50 687.7 L632.00 687.4 L631.50 687.4 L631.00 687.0 L630.50 685.5 L630.00 685.8 L629.50 686.1 L629.00 685.6 L628.50 686.2 L628.00 687.0 L627.50 687.2 L627.00 686.1 L626.50 687.4 L626.00 687.1 L625.50 685.5 L625.00 686.8 L624.50 686.4 L624.00 687.7 L623.50 687.9 L623.00 685.8 L622.50 688.4 L622.00 688.7 L621.50 687.8 L621.00 686.5 L620.50 686.1 L620.00 686.1 L619.50 686.3 L619.00 686.3 L618.50 686.6 L618.00 686.9 L617.50 688.3 L617.00 687.6 L616.50 686.2 L616.00 688.5 L615.50 687.6 L615.00 688.8 L614.50 688.9 L614.00 687.9 L613.50 688.8 L613.00 690.0 L612.50 688.9 L612.00 688.3 L611.50 685.7 L611.00 687.5 L610.50 686.2 L610.00 687.6 L609.50 687.2 L609.00 685.8 L608.50 686.6 L608.00 687.4 L607.50 702.4 L607.00 705.9 L606.50 700.4 L606.00 700.5 L605.50 701.7 L605.00 696.8 L604.50 703.3 L604.00 703.4 L603.50 695.6 L603.00 702.4 L602.50 698.9 L602.00 695.1 L601.50 702.7 L601.00 693.3 L600.50 705.4 L600.00 701.0 L599.50 711.0 L599.00 711.0 L598.50 711.5 L598.00 695.2 L597.50 697.3 L597.00 711.7 L596.50 707.8 L596.00 708.4 L595.50 706.1 L595.00 711.9 L594.50 704.8 L594.00 697.2 L593.50 687.7 L593.00 685.4 L592.50 686.3 L592.00 687.5 L591.50 687.2 L591.00 686.9 L590.50 686.2 L590.00 686.7 L589.50 691.9 L589.00 690.3 L588.50 688.7 L588.00 692.8 L587.50 689.1 L587.00 690.5 L586.50 691.3 L586.00 691.4 L585.50 691.1 L585.00 688.5 L584.50 692.2 L584.00 693.4 L583.50 690.5 L583.00 690.7 L582.50 692.3 L582.00 689.3 L581.50 688.7 L581.00 689.5 L580.50 688.1 L580.00 689.0 L579.50 694.2 L579.00 689.4 L578.50 687.9 L578.00 694.3 L577.50 694.5 L577.00 690.5 L576.50 693.1 L576.00 691.9 L575.50 693.4 L575.00 689.4 L574.50 689.6 L574.00 693.2 L573.50 692.3 L573.00 691.2 L572.50 692.7 L572.00 692.9 L571.50 695.1 L571.00 695.7 L570.50 691.2 L570.00 694.6 L569.50 693.3 L569.00 696.1 L568.50 690.0 L568.00 689.1 L567.50 690.7 L567.00 688.8 L566.50 688.6 L566.00 687.0 L565.50 685.4 L565.00 685.8 L564.50 685.8 L564.00 686.1 L563.50 686.7 L563.00 687.8 L562.50 685.9 L562.00 687.4 L561.50 712.3 L561.00 713.4 L560.50 698.3 L560.00 715.5 L559.50 709.7 L559.00 707.8 L558.50 707.9 L558.00 703.8 L557.50 701.7 L557.00 698.2 L556.50 713.7 L556.00 698.4 L555.50 711.8 L555.00 724.2 L554.50 707.6 L554.00 705.5 L553.50 718.0 L553.00 712.2 L552.50 709.3 L552.00 722.8 L551.50 729.6 L551.00 703.0 L550.50 710.6 L550.00 718.2 L549.50 701.2 L549.00 706.5 L548.50 692.4 L548.00 687.2 L547.50 686.8 L547.00 686.1 L546.50 687.1 L546.00 686.7 L545.50 686.8 L545.00 686.7 L544.50 686.7 L544.00 686.9 L543.50 687.1 L543.00 686.7 L542.50 686.2 L542.00 686.7 L541.50 697.8 L541.00 699.8 L540.50 697.8 L540.00 705.1 L539.50 705.6 L539.00 702.6 L538.50 701.8 L538.00 705.9 L537.50 691.4 L537.00 685.5 L536.50 685.3 L536.00 685.9 L535.50 685.4 L535.00 685.4 L534.50 687.2 L534.00 687.5 L533.50 690.6 L533.00 689.3 L532.50 692.2 L532.00 692.3 L531.50 691.6 L531.00 692.1 L530.50 689.4 L530.00 691.6 L529.50 691.1 L529.00 688.1 L528.50 693.3 L528.00 691.8 L527.50 687.1 L527.00 687.0 L526.50 687.6 L526.00 685.4 L525.50 687.0 L525.00 685.7 L524.50 704.1 L524.00 702.8 L523.50 698.6 L523.00 699.3 L522.50 694.8 L522.00 698.8 L521.50 709.9 L521.00 694.5 L520.50 696.2 L520.00 696.5 L519.50 710.0 L519.00 713.9 L518.50 716.1 L518.00 710.0 L517.50 698.5 L517.00 712.5 L516.50 703.7 L516.00 694.0 L515.50 688.4 L515.00 686.8 L514.50 686.3 L514.00 687.7 L513.50 686.0 L513.00 686.2 L512.50 685.9 L512.00 685.9 L511.50 685.7 L511.00 687.2 L510.50 686.2 L510.00 687.2 L509.50 699.6 L509.00 703.9 L508.50 710.5 L508.00 710.9 L507.50 707.4 L507.00 708.6 L506.50 701.7 L506.00 704.7 L505.50 701.3 L505.00 700.4 L504.50 713.2 L504.00 702.2 L503.50 710.1 L503.00 706.1 L502.50 704.2 L502.00 705.6 L501.50 701.3 L501.00 705.7 L500.50 710.2 L500.00 714.1 L499.50 713.9 L499.00 697.1 L498.50 700.5 L498.00 699.3 L497.50 704.6 L497.00 698.7 L496.50 717.7 L496.00 697.0 L495.50 693.1 L495.00 694.6 L494.50 687.8 L494.00 686.2 L493.50 686.1 L493.00 687.8 L492.50 686.2 L492.00 686.4 L491.50 701.0 L491.00 711.2 L490.50 716.4 L490.00 704.1 L489.50 696.6 L489.00 712.0 L488.50 716.2 L488.00 696.3 L487.50 702.1 L487.00 701.1 L486.50 712.7 L486.00 707.0 L485.50 705.5 L485.00 713.2 L484.50 708.9 L484.00 702.3 L483.50 698.6 L483.00 719.3 L482.50 717.8 L482.00 722.4 L481.50 700.9 L481.00 721.1 L480.50 713.1 L480.00 698.9 L479.50 721.3 L479.00 723.7 L478.50 716.1 L478.00 712.0 L477.50 714.2 L477.00 722.0 L476.50 718.9 L476.00 702.7 L475.50 721.6 L475.00 710.2 L474.50 720.7 L474.00 710.2 L473.50 722.4 L473.00 723.4 L472.50 726.2 L472.00 705.1 L471.50 703.2 L471.00 717.4 L470.50 705.9 L470.00 723.3 L469.50 700.8 L469.00 706.2 L468.50 718.9 L468.00 704.7 L467.50 705.4 L467.00 704.5 L466.50 713.1 L466.00 708.2 L465.50 721.5 L465.00 715.1 L464.50 711.6 L464.00 705.2 L463.50 727.5 L463.00 707.1 L462.50 729.3 L462.00 714.1 L461.50 703.2 L461.00 702.2 L460.50 704.5 L460.00 702.8 L459.50 717.5 L459.00 700.3 L458.50 707.2 L458.00 705.6 L457.50 697.6 L457.00 694.6 L456.50 694.9 L456.00 688.9 L455.50 685.8 L455.00 685.9 L454.50 713.0 L454.00 700.9 L453.50 717.2 L453.00 710.2 L452.50 706.4 L452.00 709.2 L451.50 712.9 L451.00 717.4 L450.50 714.7 L450.00 697.6 L449.50 703.2 L449.00 717.9 L448.50 723.2 L448.00 708.8 L447.50 700.7 L447.00 723.9 L446.50 715.1 L446.00 698.9 L445.50 708.8 L445.00 724.6 L444.50 726.2 L444.00 710.6 L443.50 704.2 L443.00 716.1 L442.50 700.6 L442.00 724.0 L441.50 716.2 L441.00 719.1 L440.50 713.6 L440.00 724.9 L439.50 723.0 L439.00 698.6 L438.50 695.5 L438.00 696.4 L437.50 690.3 L437.00 685.4 L436.50 687.4 L436.00 686.2 L435.50 687.1 L435.00 686.2 L434.50 686.0 L434.00 686.3 L433.50 686.1 L433.00 686.9 L432.50 686.1 L432.00 686.3 L431.50 686.4 L431.00 686.9 L430.50 718.5 L430.00 722.7 L429.50 716.1 L429.00 707.8 L428.50 708.2 L428.00 700.3 L427.50 721.3 L427.00 703.7 L426.50 725.2 L426.00 722.4 L425.50 715.1 L425.00 720.6 L424.50 708.6 L424.00 719.3 L423.50 724.5 L423.00 709.0 L422.50 727.8 L422.00 726.3 L421.50 703.4 L421.00 733.9 L420.50 737.5 L420.00 728.8 L419.50 735.5 L419.00 739.2 L418.50 709.5 L418.00 727.4 L417.50 740.6 L417.00 727.9 L416.50 743.8 L416.00 710.4 L415.50 708.0 L415.00 694.7 L414.50 689.7 L414.00 687.5 L413.50 690.6 L413.00 694.7 L412.50 694.4 L412.00 697.0 L411.50 700.3 L411.00 694.7 L410.50 705.2 L410.00 702.3 L409.50 701.8 L409.00 692.0 L408.50 694.6 L408.00 694.1 L407.50 705.3 L407.00 703.8 L406.50 709.4 L406.00 693.6 L405.50 690.3 L405.00 687.6 L404.50 707.5 L404.00 712.4 L403.50 711.7 L403.00 703.1 L402.50 716.3 L402.00 697.4 L401.50 707.0 L401.00 705.4 L400.50 700.2 L400.00 707.1 L399.50 699.5 L399.00 723.5 L398.50 711.0 L398.00 713.7 L397.50 719.1 L397.00 704.7 L396.50 720.4 L396.00 726.4 L395.50 706.7 L395.00 705.1 L394.50 715.3 L394.00 709.4 L393.50 695.4 L393.00 687.0 L392.50 687.8 L392.00 687.0 L391.50 687.0 L391.00 685.9 L390.50 705.3 L390.00 694.8 L389.50 701.4 L389.00 700.2 L388.50 692.9 L388.00 696.1 L387.50 705.8 L387.00 694.1 L386.50 704.5 L386.00 701.1 L385.50 703.9 L385.00 704.6 L384.50 705.5 L384.00 704.6 L383.50 694.1 L383.00 706.5 L382.50 697.1 L382.00 699.0 L381.50 700.1 L381.00 699.9 L380.50 701.0 L380.00 700.1 L379.50 703.8 L379.00 706.8 L378.50 696.5 L378.00 698.2 L377.50 711.2 L377.00 700.2 L376.50 698.6 L376.00 698.4 L375.50 698.6 L375.00 696.2 L374.50 694.6 L374.00 688.7 L373.50 687.3 L373.00 686.2 L372.50 686.5 L372.00 686.6 L371.50 686.6 L371.00 686.0 L370.50 687.7 L370.00 686.1 L369.50 687.3 L369.00 687.4 L368.50 699.2 L368.00 710.7 L367.50 701.9 L367.00 708.9 L366.50 708.7 L366.00 711.7 L365.50 713.3 L365.00 699.2 L364.50 699.0 L364.00 699.7 L363.50 696.6 L363.00 706.3 L362.50 713.5 L362.00 697.8 L361.50 717.1 L361.00 718.6 L360.50 714.0 L360.00 706.8 L359.50 694.6 L359.00 686.0 L358.50 685.6 L358.00 686.8 L357.50 692.0 L357.00 692.1 L356.50 687.9 L356.00 693.3 L355.50 692.1 L355.00 692.2 L354.50 687.6 L354.00 689.8 L353.50 691.1 L353.00 691.7 L352.50 689.9 L352.00 690.4 L351.50 694.2 L351.00 689.8 L350.50 691.8 L350.00 687.9 L349.50 692.5 L349.00 691.1 L348.50 690.0 L348.00 688.6 L347.50 688.3 L347.00 693.6 L346.50 692.5 L346.00 687.9 L345.50 688.1 L345.00 692.5 L344.50 693.2 L344.00 688.8 L343.50 695.3 L343.00 694.0 L342.50 693.5 L342.00 695.1 L341.50 693.0 L341.00 690.3 L340.50 691.2 L340.00 694.2 L339.50 695.5 L339.00 688.9 L338.50 693.5 L338.00 693.5 L337.50 692.1 L337.00 693.2 L336.50 693.5 L336.00 688.3 L335.50 694.3 L335.00 693.6 L334.50 690.2 L334.00 695.0 L333.50 690.2 L333.00 693.5 L332.50 693.6 L332.00 693.6 L331.50 692.5 L331.00 689.6 L330.50 696.5 L330.00 690.1 L329.50 695.5 L329.00 693.9 L328.50 691.4 L328.00 694.4 L327.50 691.2 L327.00 689.6 L326.50 690.9 L326.00 689.5 L325.50 689.7 L325.00 693.1 L324.50 693.9 L324.00 689.9 L323.50 696.6 L323.00 691.9 L322.50 690.1 L322.00 692.5 L321.50 690.2 L321.00 692.1 L320.50 697.3 L320.00 693.3 L319.50 691.0 L319.00 696.9 L318.50 692.0 L318.00 697.2 L317.50 689.1 L317.00 688.8 L316.50 694.5 L316.00 689.2 L315.50 697.1 L315.00 690.1 L314.50 697.5 L314.00 697.0 L313.50 690.0 L313.00 691.7 L312.50 696.1 L312.00 692.4 L311.50 696.8 L311.00 696.4 L310.50 690.4 L310.00 691.1 L309.50 695.2 L309.00 691.8 L308.50 692.7 L308.00 692.8 L307.50 692.9 L307.00 696.3 L306.50 697.0 L306.00 695.8 L305.50 692.6 L305.00 689.2 L304.50 689.0 L304.00 692.6 L303.50 689.0 L303.00 689.1 L302.50 688.1 L302.00 689.1 L301.50 687.6 L301.00 686.6 L300.50 686.5 L300.00 686.8 L299.50 685.5 L299.00 687.1 L298.50 686.9 L298.00 687.6 L297.50 686.9 L297.00 687.8 L296.50 688.7 L296.00 693.6 L295.50 696.0 L295.00 695.8 L294.50 696.0 L294.00 690.3 L293.50 695.4 L293.00 696.4 L292.50 690.0 L292.00 690.7 L291.50 690.4 L291.00 692.8 L290.50 692.4 L290.00 697.8 L289.50 698.1 L289.00 698.1 L288.50 693.9 L288.00 697.3 L287.50 699.6 L287.00 698.7 L286.50 693.1 L286.00 694.8 L285.50 693.3 L285.00 698.3 L284.50 690.1 L284.00 690.3 L283.50 686.2 L283.00 686.5 L282.50 687.5 L282.00 686.5 L281.50 686.9 L281.00 686.6 L280.50 686.6 L280.00 686.1 L279.50 686.7 L279.00 687.2 L278.50 690.9 L278.00 695.4 L277.50 693.0 L277.00 689.5 L276.50 695.2 L276.00 695.8 L275.50 696.5 L275.00 696.6 L274.50 698.1 L274.00 693.3 L273.50 697.2 L273.00 692.5 L272.50 689.4 L272.00 691.9 L271.50 694.9 L271.00 698.6 L270.50 697.3 L270.00 695.7 L269.50 695.6 L269.00 697.2 L268.50 690.9 L268.00 691.4 L267.50 695.9 L267.00 694.7 L266.50 692.4 L266.00 698.9 L265.50 691.7 L265.00 692.4 L264.50 697.0 L264.00 699.3 L263.50 700.9 L263.00 694.0 L262.50 691.2 L262.00 689.6 L261.50 687.8 L261.00 687.8 L260.50 688.9 L260.00 691.8 L259.50 692.7 L259.00 695.1 L258.50 689.6 L258.00 693.9 L257.50 689.3 L257.00 691.2 L256.50 689.9 L256.00 693.1 L255.50 694.9 L255.00 691.6 L254.50 693.5 L254.00 694.3 L253.50 687.9 L253.00 685.5 L252.50 687.7 L252.00 687.4 L251.50 686.6 L251.00 685.9 L250.50 685.7 L250.00 687.5 L249.50 687.8 L249.00 685.6 L248.50 696.4 L248.00 689.2 L247.50 695.2 L247.00 696.2 L246.50 693.7 L246.00 690.9 L245.50 690.5 L245.00 693.5 L244.50 692.2 L244.00 696.1 L243.50 692.2 L243.00 699.9 L242.50 700.7 L242.00 692.1 L241.50 697.2 L241.00 692.0 L240.50 699.1 L240.00 691.3 L239.50 702.1 L239.00 698.6 L238.50 693.3 L238.00 696.9 L237.50 690.8 L237.00 700.7 L236.50 692.0 L236.00 692.6 L235.50 694.5 L235.00 695.9 L234.50 695.7 L234.00 691.3 L233.50 699.4 L233.00 694.5 L232.50 691.7 L232.00 690.4 L231.50 690.9 L231.00 686.8 L230.50 687.1 L230.00 687.4 L229.50 687.2 L229.00 687.5 L228.50 687.5 L228.00 686.9 L227.50 687.8 L227.00 685.6 L226.50 686.0 L226.00 687.8 L225.50 687.6 L225.00 686.2 L224.50 690.4 L224.00 688.7 L223.50 688.9 L223.00 693.6 L222.50 691.3 L222.00 695.6 L221.50 690.2 L221.00 694.3 L220.50 693.8 L220.00 689.0 L219.50 689.8 L219.00 690.5 L218.50 695.5 L218.00 691.0 L217.50 689.6 L217.00 693.3 L216.50 691.9 L216.00 695.9 L215.50 699.2 L215.00 696.2 L214.50 688.9 L214.00 688.3 L213.50 687.0 L213.00 686.1 L212.50 687.0 L212.00 685.4 L211.50 687.6 L211.00 687.6 L210.50 690.7 L210.00 690.7 L209.50 689.5 L209.00 689.6 L208.50 696.3 L208.00 692.7 L207.50 691.2 L207.00 698.8 L206.50 692.5 L206.00 690.5 L205.50 692.9 L205.00 698.0 L204.50 699.1 L204.00 701.0 L203.50 701.4 L203.00 704.2 L202.50 693.1 L202.00 690.0 L201.50 687.0 L201.00 687.0 L200.50 696.4 L200.00 706.1 L199.50 708.0 L199.00 702.5 L198.50 694.5 L198.00 702.4 L197.50 704.5 L197.00 699.0 L196.50 715.0 L196.00 706.8 L195.50 705.8 L195.00 699.3 L194.50 710.8 L194.00 703.5 L193.50 696.8 L193.00 703.7 L192.50 700.1 L192.00 699.0 L191.50 702.7 L191.00 704.4 L190.50 711.7 L190.00 701.9 L189.50 693.1Z" fill="#6a6a6a"/></g></svg>
<div class="a" style="left:189px;top:659px;width:602px;height:1.5px;background:rgba(200,200,200,0.85)"></div>
<div class="a" style="left:113px;top:767px;width:76px;height:11px;border-radius:6px;background:repeating-linear-gradient(135deg,#74dcc8 0 2px,#3f9e90 2px 3px)"></div>
<div class="a" style="left:114px;top:781px;width:933px;height:9.5px;border-radius:5px;background:#cbcbcb"></div>
<div class="a" style="left:250.5px;top:427px;width:1.6px;height:373px;background:#2f6fd6"></div>
<svg style="left:244.5px;top:419.5px" width="14" height="14" viewBox="0 0 14 14"><path d="M1.5 0h11a1.5 1.5 0 0 1 1.5 1.5V8L7 13.5 0 8V1.5A1.5 1.5 0 0 1 1.5 0z" fill="#0b6cf8"/></svg>
<svg style="left:0;top:0" width="0" height="0"><defs>
<linearGradient id="sky" x1="0" y1="0" x2="0" y2="1">
 <stop offset="0" stop-color="#63739a"/><stop offset="0.1" stop-color="#7b8aac"/><stop offset="0.19" stop-color="#a3abc2"/>
 <stop offset="0.25" stop-color="#d9d6d4"/><stop offset="0.29" stop-color="#f3e6c2"/><stop offset="0.34" stop-color="#f7dc9c"/>
 <stop offset="0.39" stop-color="#f4c47a"/><stop offset="0.43" stop-color="#eea468"/><stop offset="0.465" stop-color="#dc8b6c"/><stop offset="0.49" stop-color="#c9a29c"/><stop offset="1" stop-color="#d4cac6"/>
</linearGradient>
<linearGradient id="water" x1="0" y1="0" x2="0" y2="1">
 <stop offset="0" stop-color="#b3bed0"/><stop offset="0.35" stop-color="#97a6bd"/><stop offset="1" stop-color="#6a809f"/>
</linearGradient>
<linearGradient id="rock" x1="0" y1="0" x2="0" y2="1">
 <stop offset="0" stop-color="#9a6450"/><stop offset="0.5" stop-color="#835848"/><stop offset="1" stop-color="#6a5048"/>
</linearGradient>
<linearGradient id="skin" x1="0" y1="0" x2="0" y2="1">
 <stop offset="0" stop-color="#d2b4a6"/><stop offset="0.6" stop-color="#c4a091"/><stop offset="1" stop-color="#a27e70"/>
</linearGradient>
<radialGradient id="haze" cx="0.2" cy="0.3" r="0.6">
 <stop offset="0" stop-color="#e6e4e6" stop-opacity="0.55"/><stop offset="1" stop-color="#e6e4e6" stop-opacity="0"/>
</radialGradient>

</defs></svg>

<!-- ============ VIDEO PREVIEW ============ -->
<svg style="left:768px;top:160px;overflow:hidden" width="282" height="158" viewBox="0 0 282 158" preserveAspectRatio="none">
 <rect width="282" height="158" fill="url(#sky)"/>
 <ellipse cx="45" cy="30" rx="70" ry="14" fill="url(#haze)"/>
 <!-- haze water left -->
 <rect x="0" y="74" width="195" height="32" fill="#dacfc9"/>
 <rect x="0" y="71" width="195" height="5" fill="#c9988a" opacity="0.55"/>
 <g stroke="#b0a4a0" stroke-width="0.7" opacity="0.85">
  <path d="M8 88v18M20 85v21M32 83v23M44 81v25M56 79v27M68 77v29M80 76v30M92 75v31M104 74v30"/>
 </g>
 <!-- cables -->
 <path d="M0 90L123 34M0 94L123 38" stroke="#70483f" stroke-width="1" fill="none"/>
 <!-- tower -->
 <path d="M121.6 33.5h4v42h-4zM130.4 33.5h4v42h-4zM121.6 46h12.8v2.6h-12.8zM121.6 60h12.8v2.6h-12.8z" fill="#d35c3e"/>
 <!-- far right hills -->
 <path d="M172 72 C200 69 240 68 282 69 L282 80 L172 86z" fill="#5d6882"/>
 <!-- water right -->
 <path d="M180 82 L282 76 L282 158 L180 158z" fill="url(#water)"/>
 <path d="M192 88 C200 100 205 115 200 130 L190 135z" fill="#cfd3dc" opacity="0.45"/>
 <path d="M188 84 L222 79" stroke="#6a6468" stroke-width="2"/>
 <path d="M215 61h2.2v22h-2.2zM220 61h2.2v22h-2.2z" fill="#c8845e"/>
 <!-- rocks -->
 <path d="M0 104 C18 100 40 99 58 102 C76 105 92 109 112 106 L118 158 L0 158z" fill="url(#rock)"/>
 <path d="M0 124 C25 118 55 124 85 130 L95 158 L0 158z" fill="#7a5546" opacity="0.6"/>
 <path d="M0 140 C30 134 60 140 100 150 L100 158 L0 158z" fill="#5a4a44" opacity="0.55"/>
 <path d="M64 136 C74 132 88 134 96 142 L80 147z" fill="#9a9aa2" opacity="0.7"/>
 <path d="M12 110 C24 107 36 110 44 116 L22 119z" fill="#b07c64" opacity="0.55"/>
 <!-- shirt -->
 <path d="M104 158 L106 90 C107 82 114 78 128 75 L142 71 L165 71 L180 74 C188 76 191 82 193 96 L196 158z" fill="#141414"/>
 <!-- neck -->
 <path d="M141 60h24v14c-4 5-20 5-24 0z" fill="#b48e7e"/>
 <!-- face -->
 <path d="M135.4 42 C135.4 30 142 25.6 152 25.6 C163 25.6 169 31 169 42 L168 58 C166 68 160 73 152 73 C144 73 138 68 136 58z" fill="url(#skin)"/>
 <!-- hair -->
 <path d="M131.5 38 C131 24 140 16.8 153 16.8 C166 16.8 175 24 175 38 L169.5 36 C168 30 162 26 152 26 C143 26 137 30 135.5 36z" fill="#241b1a"/>
 <!-- headphones -->
 <rect x="127.5" y="31.6" width="10" height="29.5" rx="5" fill="#2a2828"/>
 <rect x="166.5" y="32.6" width="10" height="30.5" rx="5" fill="#2a2828"/>
 <rect x="130.5" y="34" width="4" height="9" rx="1.5" fill="#c4c4c4"/>
 <rect x="169.5" y="35" width="4" height="9" rx="1.5" fill="#c4c4c4"/>
 <path d="M139 49h27" stroke="#7b6c68" stroke-width="0.9"/>
 <!-- fist -->
 <path d="M160 98 C164 92 178 92 183 100 C186 108 182 117 174 118 C166 118 159 110 160 98z" fill="#c99d8c"/>
 <!-- arm across -->
 <path d="M108 123 C130 120 160 118 190 116 L191 130 C165 134 130 138 108 140z" fill="#bb9282"/>
 <path d="M112 146 C130 148 150 150 172 146 L176 158 L112 158z" fill="#a27a6a" opacity="0.8"/>
 <text x="132" y="113" font-family="Liberation Sans" font-size="7" fill="#c9c9c9" opacity="0.8">ngdo</text>
</svg>
<div class="t" style="left:819px;top:283.5px;width:174px;text-align:center;font-size:18px;color:#fff;letter-spacing:-0.25px;-webkit-text-stroke:0.45px #fff;text-shadow:0 0 1px rgba(0,0,0,.25)">How are things going?</div>
<svg style="left:785px;top:272px" width="245" height="45" viewBox="785 272 245 45"><g stroke="#8b65ee" stroke-width="2.2" fill="none"><rect x="793.5" y="280.5" width="225.5" height="28"/></g>
<g fill="#fff" stroke="#8b65ee" stroke-width="2"><circle cx="793.5" cy="280.5" r="4"/><circle cx="906" cy="280.5" r="4"/><circle cx="1019" cy="280.5" r="4"/><circle cx="793.5" cy="294.5" r="4"/><circle cx="1019" cy="294.5" r="4"/><circle cx="793.5" cy="308.5" r="4"/><circle cx="906" cy="308.5" r="4"/><circle cx="1019" cy="308.5" r="4"/></g></svg>

</div>
</body></html>
